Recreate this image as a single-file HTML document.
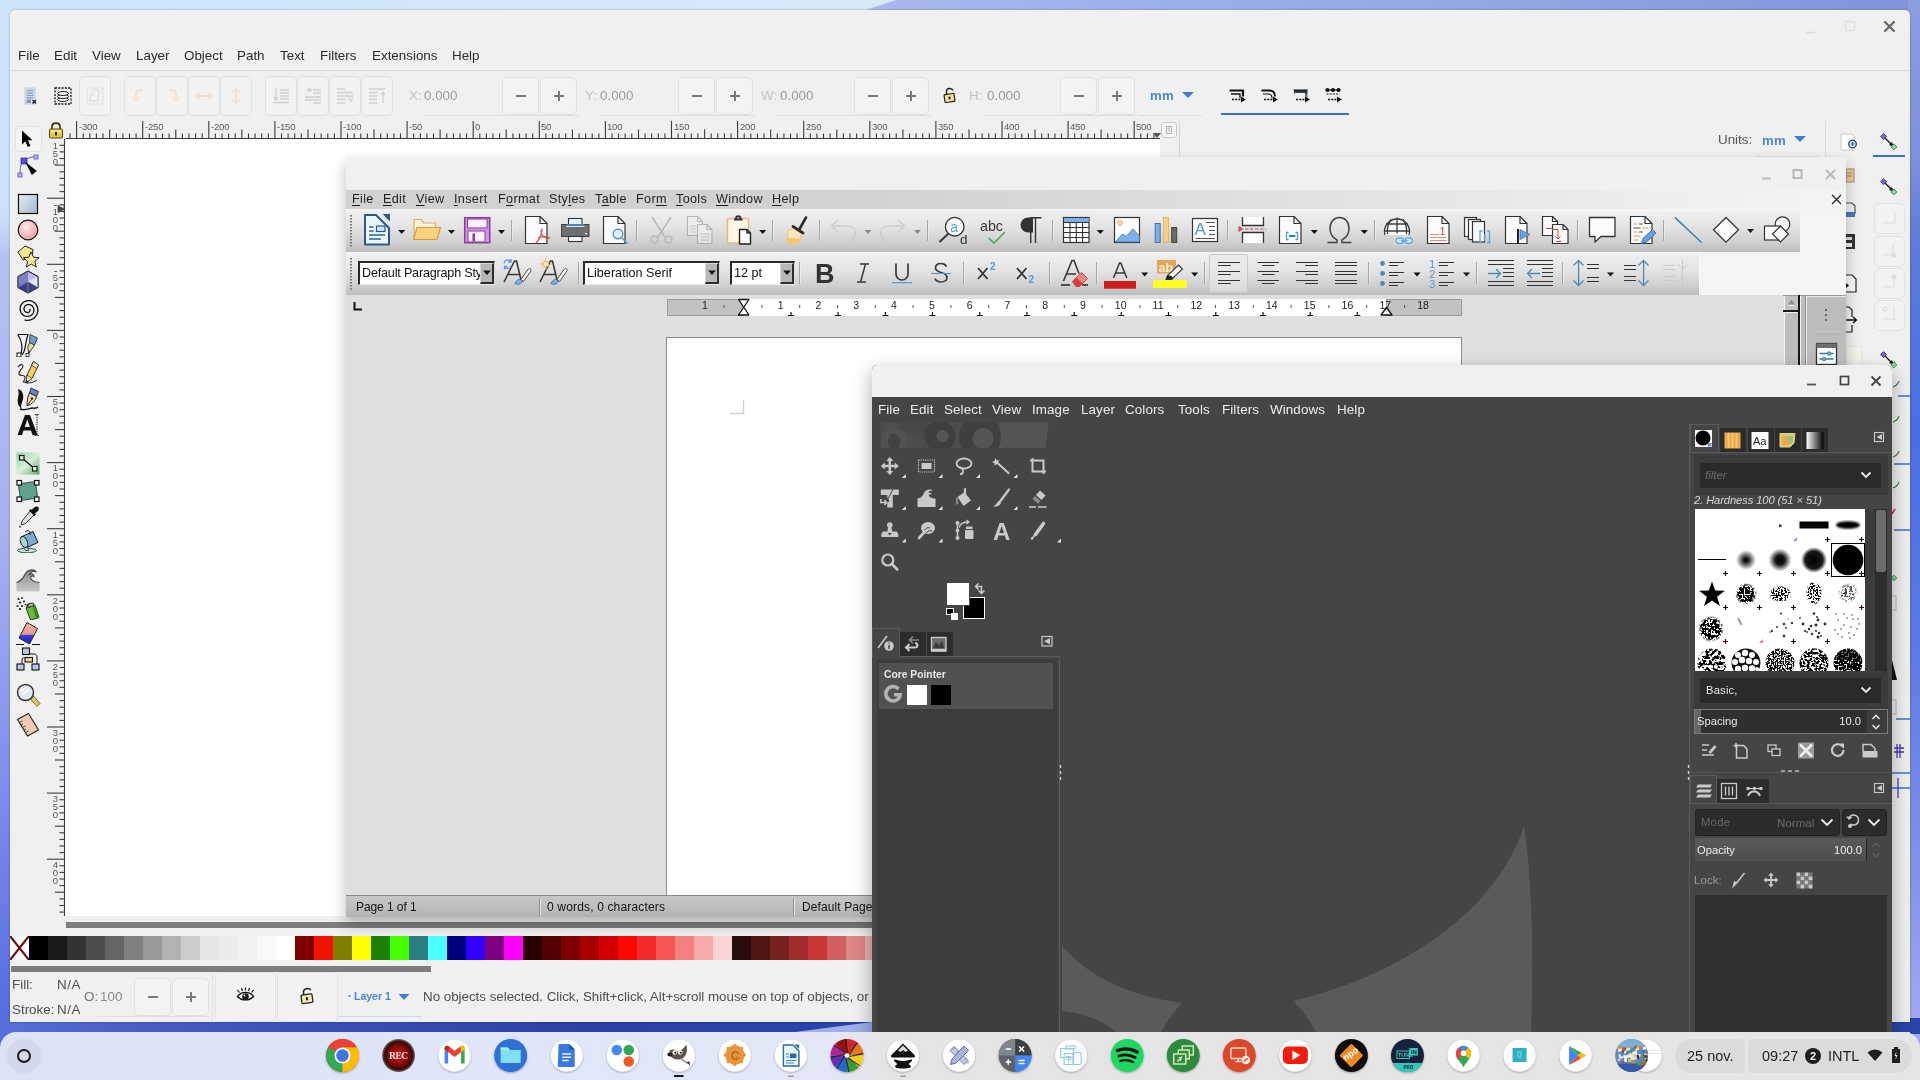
<!DOCTYPE html>
<html><head><meta charset="utf-8"><title>desktop</title><style>
html,body{margin:0;padding:0}
body{width:1920px;height:1080px;position:relative;overflow:hidden;background:#8c9be6;font-family:"Liberation Sans",sans-serif;}
div,svg{position:absolute;}
.t{white-space:nowrap;will-change:transform;}
svg{will-change:transform;}
u{text-decoration:underline;text-underline-offset:1.5px;text-decoration-thickness:1px}
</style></head><body>
<div style="left:0px;top:0px;width:1920px;height:12px;background:linear-gradient(90deg,#cfe4fb 0%,#d8eafa 45%,#d9e9f9 46%);"></div><svg style="left:0px;top:0px;" width="1920" height="12" viewBox="0 0 1920 12"><defs><linearGradient id="wpt" x1="0" x2="1"><stop offset="0" stop-color="#aab8ec"/><stop offset=".25" stop-color="#9fb0f0"/><stop offset=".6" stop-color="#93a6e4"/><stop offset="1" stop-color="#8094dc"/></linearGradient></defs><path d="M866 10 L896 0 L1920 0 L1920 12 L866 12Z" fill="url(#wpt)"/></svg><div style="left:0px;top:0px;width:12px;height:1080px;background:linear-gradient(180deg,#cfe4fb 0%,#cbe0fa 20%,#b4c0f4 24%,#a8b0f0 50%,#7f8fee 72%,#5a70e0 92%,#4f6ae0 100%);"></div><div style="left:1908px;top:0px;width:12px;height:1080px;background:linear-gradient(180deg,#8c9fe0 0%,#7c90dc 15%,#5f7cd8 22%,#4a6ee0 40%,#5d7ae4 60%,#7d8fe8 78%,#a0a8f0 94%);"></div><div style="left:0px;top:1018px;width:1920px;height:16px;background:linear-gradient(90deg,#5670dc 0%,#4a60c8 6%,#3a50b8 16%,#2b42a8 30%,#2b44ac 42%);"></div><svg style="left:780px;top:1018px;" width="140" height="16" viewBox="0 0 140 16"><path d="M0 16 L92 4 L140 4 L140 16Z" fill="#9fb0ea"/></svg>
<div style="left:10px;top:10px;width:1900px;height:1012px;background:#f0f0f0;border-radius:5px 5px 0 0;box-shadow:0 0 3px rgba(0,0,0,.25);"></div><svg style="left:1800px;top:14px;" width="100" height="26" viewBox="0 0 100 26"><path d="M6 18.5h9" stroke="#dcdcdc" stroke-width="1.6"/><rect x="45.5" y="7.5" width="9" height="9" fill="none" stroke="#e0e0e0" stroke-width="1.4"/><path d="M85 8l9 9M94 8l-9 9" stroke="#666" stroke-width="2.2" stroke-linecap="round"/></svg><div class="t" style="left:18px;top:47px;font-size:13.4px;color:#2a2a2a;line-height:17px;">File</div><div class="t" style="left:54px;top:47px;font-size:13.4px;color:#2a2a2a;line-height:17px;">Edit</div><div class="t" style="left:92px;top:47px;font-size:13.4px;color:#2a2a2a;line-height:17px;">View</div><div class="t" style="left:136px;top:47px;font-size:13.4px;color:#2a2a2a;line-height:17px;">Layer</div><div class="t" style="left:184px;top:47px;font-size:13.4px;color:#2a2a2a;line-height:17px;">Object</div><div class="t" style="left:237px;top:47px;font-size:13.4px;color:#2a2a2a;line-height:17px;">Path</div><div class="t" style="left:280px;top:47px;font-size:13.4px;color:#2a2a2a;line-height:17px;">Text</div><div class="t" style="left:320px;top:47px;font-size:13.4px;color:#2a2a2a;line-height:17px;">Filters</div><div class="t" style="left:372px;top:47px;font-size:13.4px;color:#2a2a2a;line-height:17px;">Extensions</div><div class="t" style="left:452px;top:47px;font-size:13.4px;color:#2a2a2a;line-height:17px;">Help</div><div style="left:10px;top:70px;width:1900px;height:1px;background:#dadada;"></div><div style="left:79px;top:76px;width:32px;height:40px;border:1px solid #e1e1e1;border-radius:5px;box-sizing:border-box;background:#f2f2f2;"></div><div style="left:124px;top:76px;width:32px;height:40px;border:1px solid #e1e1e1;border-radius:5px;box-sizing:border-box;background:#f2f2f2;"></div><div style="left:156px;top:76px;width:32px;height:40px;border:1px solid #e1e1e1;border-radius:5px;box-sizing:border-box;background:#f2f2f2;"></div><div style="left:188px;top:76px;width:32px;height:40px;border:1px solid #e1e1e1;border-radius:5px;box-sizing:border-box;background:#f2f2f2;"></div><div style="left:220px;top:76px;width:32px;height:40px;border:1px solid #e1e1e1;border-radius:5px;box-sizing:border-box;background:#f2f2f2;"></div><div style="left:265px;top:76px;width:32px;height:40px;border:1px solid #e1e1e1;border-radius:5px;box-sizing:border-box;background:#f2f2f2;"></div><div style="left:297px;top:76px;width:32px;height:40px;border:1px solid #e1e1e1;border-radius:5px;box-sizing:border-box;background:#f2f2f2;"></div><div style="left:329px;top:76px;width:32px;height:40px;border:1px solid #e1e1e1;border-radius:5px;box-sizing:border-box;background:#f2f2f2;"></div><div style="left:361px;top:76px;width:32px;height:40px;border:1px solid #e1e1e1;border-radius:5px;box-sizing:border-box;background:#f2f2f2;"></div><div class="t" style="left:409px;top:87px;font-size:13.4px;color:#c4c4c4;line-height:17px;">X:</div><div class="t" style="left:424px;top:87px;font-size:13.4px;color:#9a9a9a;line-height:17px;">0.000</div><div style="left:424px;top:115px;width:155px;height:1px;background:#e0e0e0;"></div><div style="left:502px;top:77px;width:37px;height:38px;border:1px solid #e1e1e1;border-radius:5px;box-sizing:border-box;background:#f3f3f3;"></div><div style="left:515.5px;top:95px;width:10px;height:2px;background:#7a7a7a;"></div><div style="left:540px;top:77px;width:37px;height:38px;border:1px solid #e1e1e1;border-radius:5px;box-sizing:border-box;background:#f3f3f3;"></div><div style="left:553.5px;top:95px;width:10px;height:2px;background:#7a7a7a;"></div><div style="left:557.5px;top:91px;width:2px;height:10px;background:#7a7a7a;"></div><div class="t" style="left:585px;top:87px;font-size:13.4px;color:#c4c4c4;line-height:17px;">Y:</div><div class="t" style="left:600px;top:87px;font-size:13.4px;color:#9a9a9a;line-height:17px;">0.000</div><div style="left:600px;top:115px;width:155px;height:1px;background:#e0e0e0;"></div><div style="left:678px;top:77px;width:37px;height:38px;border:1px solid #e1e1e1;border-radius:5px;box-sizing:border-box;background:#f3f3f3;"></div><div style="left:691.5px;top:95px;width:10px;height:2px;background:#7a7a7a;"></div><div style="left:716px;top:77px;width:37px;height:38px;border:1px solid #e1e1e1;border-radius:5px;box-sizing:border-box;background:#f3f3f3;"></div><div style="left:729.5px;top:95px;width:10px;height:2px;background:#7a7a7a;"></div><div style="left:733.5px;top:91px;width:2px;height:10px;background:#7a7a7a;"></div><div class="t" style="left:761px;top:87px;font-size:13.4px;color:#c4c4c4;line-height:17px;">W:</div><div class="t" style="left:780px;top:87px;font-size:13.4px;color:#9a9a9a;line-height:17px;">0.000</div><div style="left:776px;top:115px;width:155px;height:1px;background:#e0e0e0;"></div><div style="left:854px;top:77px;width:37px;height:38px;border:1px solid #e1e1e1;border-radius:5px;box-sizing:border-box;background:#f3f3f3;"></div><div style="left:867.5px;top:95px;width:10px;height:2px;background:#7a7a7a;"></div><div style="left:892px;top:77px;width:37px;height:38px;border:1px solid #e1e1e1;border-radius:5px;box-sizing:border-box;background:#f3f3f3;"></div><div style="left:905.5px;top:95px;width:10px;height:2px;background:#7a7a7a;"></div><div style="left:909.5px;top:91px;width:2px;height:10px;background:#7a7a7a;"></div><div class="t" style="left:969px;top:87px;font-size:13.4px;color:#c4c4c4;line-height:17px;">H:</div><div class="t" style="left:987px;top:87px;font-size:13.4px;color:#9a9a9a;line-height:17px;">0.000</div><div style="left:984px;top:115px;width:152px;height:1px;background:#e0e0e0;"></div><div style="left:1060px;top:77px;width:37px;height:38px;border:1px solid #e1e1e1;border-radius:5px;box-sizing:border-box;background:#f3f3f3;"></div><div style="left:1073.5px;top:95px;width:10px;height:2px;background:#7a7a7a;"></div><div style="left:1098px;top:77px;width:37px;height:38px;border:1px solid #e1e1e1;border-radius:5px;box-sizing:border-box;background:#f3f3f3;"></div><div style="left:1111.5px;top:95px;width:10px;height:2px;background:#7a7a7a;"></div><div style="left:1115.5px;top:91px;width:2px;height:10px;background:#7a7a7a;"></div><div class="t" style="left:1150px;top:87px;font-size:13.2px;font-weight:bold;color:#4a88d0;line-height:17px;letter-spacing:.35px;">mm</div><svg style="left:1181px;top:91px;" width="14" height="8" viewBox="0 0 14 8"><path d="M1 1h12l-6 6z" fill="#3f7fd6"/></svg><div style="left:1138px;top:115px;width:64px;height:1px;background:#e0e0e0;"></div><div style="left:1221px;top:113px;width:128px;height:2px;background:#3d6fd0;"></div><div class="t" style="left:1718px;top:131px;font-size:13.4px;color:#555;line-height:17px;">Units:</div><div class="t" style="left:1762px;top:132px;font-size:13.2px;font-weight:bold;color:#4a88d0;line-height:17px;letter-spacing:.35px;">mm</div><svg style="left:1793px;top:135px;" width="14" height="8" viewBox="0 0 14 8"><path d="M1 1h12l-6 6z" fill="#3f7fd6"/></svg><div style="left:1755px;top:156px;width:64px;height:1px;background:#e0e0e0;"></div><div style="left:1825px;top:121px;width:1px;height:40px;background:#dcdcdc;"></div><div style="left:1873px;top:155px;width:32px;height:2px;background:#3d6fd0;"></div><div style="left:65px;top:139px;width:1095px;height:777px;background:#fff;"></div><div style="left:1179px;top:121px;width:1px;height:40px;background:#d4d4d4;"></div><div style="left:1161px;top:122px;width:16px;height:16px;border:1px solid #c8c8c8;border-radius:3px;box-sizing:border-box;background:#f6f6f6;"></div><svg style="left:0px;top:0px;" width="1200" height="140" viewBox="0 0 1200 140"><g stroke="#3a3a3a" stroke-width="1.1" fill="none"><path d="M70.0 133.5V138"/><path d="M76.6 121V138"/><path d="M83.2 133.5V138"/><path d="M89.8 133.5V138"/><path d="M96.4 133.5V138"/><path d="M103.0 133.5V138"/><path d="M109.7 129.5V138"/><path d="M116.3 133.5V138"/><path d="M122.9 133.5V138"/><path d="M129.5 133.5V138"/><path d="M136.1 133.5V138"/><path d="M142.7 121V138"/><path d="M149.3 133.5V138"/><path d="M155.9 133.5V138"/><path d="M162.5 133.5V138"/><path d="M169.1 133.5V138"/><path d="M175.8 129.5V138"/><path d="M182.4 133.5V138"/><path d="M189.0 133.5V138"/><path d="M195.6 133.5V138"/><path d="M202.2 133.5V138"/><path d="M208.8 121V138"/><path d="M215.4 133.5V138"/><path d="M222.0 133.5V138"/><path d="M228.6 133.5V138"/><path d="M235.2 133.5V138"/><path d="M241.8 129.5V138"/><path d="M248.5 133.5V138"/><path d="M255.1 133.5V138"/><path d="M261.7 133.5V138"/><path d="M268.3 133.5V138"/><path d="M274.9 121V138"/><path d="M281.5 133.5V138"/><path d="M288.1 133.5V138"/><path d="M294.7 133.5V138"/><path d="M301.3 133.5V138"/><path d="M308.0 129.5V138"/><path d="M314.6 133.5V138"/><path d="M321.2 133.5V138"/><path d="M327.8 133.5V138"/><path d="M334.4 133.5V138"/><path d="M341.0 121V138"/><path d="M347.6 133.5V138"/><path d="M354.2 133.5V138"/><path d="M360.8 133.5V138"/><path d="M367.4 133.5V138"/><path d="M374.0 129.5V138"/><path d="M380.7 133.5V138"/><path d="M387.3 133.5V138"/><path d="M393.9 133.5V138"/><path d="M400.5 133.5V138"/><path d="M407.1 121V138"/><path d="M413.7 133.5V138"/><path d="M420.3 133.5V138"/><path d="M426.9 133.5V138"/><path d="M433.5 133.5V138"/><path d="M440.1 129.5V138"/><path d="M446.8 133.5V138"/><path d="M453.4 133.5V138"/><path d="M460.0 133.5V138"/><path d="M466.6 133.5V138"/><path d="M473.2 121V138"/><path d="M479.8 133.5V138"/><path d="M486.4 133.5V138"/><path d="M493.0 133.5V138"/><path d="M499.6 133.5V138"/><path d="M506.2 129.5V138"/><path d="M512.9 133.5V138"/><path d="M519.5 133.5V138"/><path d="M526.1 133.5V138"/><path d="M532.7 133.5V138"/><path d="M539.3 121V138"/><path d="M545.9 133.5V138"/><path d="M552.5 133.5V138"/><path d="M559.1 133.5V138"/><path d="M565.7 133.5V138"/><path d="M572.4 129.5V138"/><path d="M579.0 133.5V138"/><path d="M585.6 133.5V138"/><path d="M592.2 133.5V138"/><path d="M598.8 133.5V138"/><path d="M605.4 121V138"/><path d="M612.0 133.5V138"/><path d="M618.6 133.5V138"/><path d="M625.2 133.5V138"/><path d="M631.8 133.5V138"/><path d="M638.5 129.5V138"/><path d="M645.1 133.5V138"/><path d="M651.7 133.5V138"/><path d="M658.3 133.5V138"/><path d="M664.9 133.5V138"/><path d="M671.5 121V138"/><path d="M678.1 133.5V138"/><path d="M684.7 133.5V138"/><path d="M691.3 133.5V138"/><path d="M697.9 133.5V138"/><path d="M704.6 129.5V138"/><path d="M711.2 133.5V138"/><path d="M717.8 133.5V138"/><path d="M724.4 133.5V138"/><path d="M731.0 133.5V138"/><path d="M737.6 121V138"/><path d="M744.2 133.5V138"/><path d="M750.8 133.5V138"/><path d="M757.4 133.5V138"/><path d="M764.0 133.5V138"/><path d="M770.7 129.5V138"/><path d="M777.3 133.5V138"/><path d="M783.9 133.5V138"/><path d="M790.5 133.5V138"/><path d="M797.1 133.5V138"/><path d="M803.7 121V138"/><path d="M810.3 133.5V138"/><path d="M816.9 133.5V138"/><path d="M823.5 133.5V138"/><path d="M830.1 133.5V138"/><path d="M836.8 129.5V138"/><path d="M843.4 133.5V138"/><path d="M850.0 133.5V138"/><path d="M856.6 133.5V138"/><path d="M863.2 133.5V138"/><path d="M869.8 121V138"/><path d="M876.4 133.5V138"/><path d="M883.0 133.5V138"/><path d="M889.6 133.5V138"/><path d="M896.2 133.5V138"/><path d="M902.9 129.5V138"/><path d="M909.5 133.5V138"/><path d="M916.1 133.5V138"/><path d="M922.7 133.5V138"/><path d="M929.3 133.5V138"/><path d="M935.9 121V138"/><path d="M942.5 133.5V138"/><path d="M949.1 133.5V138"/><path d="M955.7 133.5V138"/><path d="M962.3 133.5V138"/><path d="M969.0 129.5V138"/><path d="M975.6 133.5V138"/><path d="M982.2 133.5V138"/><path d="M988.8 133.5V138"/><path d="M995.4 133.5V138"/><path d="M1002.0 121V138"/><path d="M1008.6 133.5V138"/><path d="M1015.2 133.5V138"/><path d="M1021.8 133.5V138"/><path d="M1028.4 133.5V138"/><path d="M1035.0 129.5V138"/><path d="M1041.7 133.5V138"/><path d="M1048.3 133.5V138"/><path d="M1054.9 133.5V138"/><path d="M1061.5 133.5V138"/><path d="M1068.1 121V138"/><path d="M1074.7 133.5V138"/><path d="M1081.3 133.5V138"/><path d="M1087.9 133.5V138"/><path d="M1094.5 133.5V138"/><path d="M1101.1 129.5V138"/><path d="M1107.8 133.5V138"/><path d="M1114.4 133.5V138"/><path d="M1121.0 133.5V138"/><path d="M1127.6 133.5V138"/><path d="M1134.2 121V138"/><path d="M1140.8 133.5V138"/><path d="M1147.4 133.5V138"/><path d="M1154.0 133.5V138"/><path d="M66 138.5H1160" /></g></svg><div class="t" style="left:78.6px;top:121px;font-size:9.5px;color:#5a5a5a;line-height:11px;letter-spacing:-.2px;">-300</div><div class="t" style="left:144.7px;top:121px;font-size:9.5px;color:#5a5a5a;line-height:11px;letter-spacing:-.2px;">-250</div><div class="t" style="left:210.79999999999998px;top:121px;font-size:9.5px;color:#5a5a5a;line-height:11px;letter-spacing:-.2px;">-200</div><div class="t" style="left:276.9px;top:121px;font-size:9.5px;color:#5a5a5a;line-height:11px;letter-spacing:-.2px;">-150</div><div class="t" style="left:343.0px;top:121px;font-size:9.5px;color:#5a5a5a;line-height:11px;letter-spacing:-.2px;">-100</div><div class="t" style="left:409.1px;top:121px;font-size:9.5px;color:#5a5a5a;line-height:11px;letter-spacing:-.2px;">-50</div><div class="t" style="left:475.19999999999993px;top:121px;font-size:9.5px;color:#5a5a5a;line-height:11px;letter-spacing:-.2px;">0</div><div class="t" style="left:541.3px;top:121px;font-size:9.5px;color:#5a5a5a;line-height:11px;letter-spacing:-.2px;">50</div><div class="t" style="left:607.4px;top:121px;font-size:9.5px;color:#5a5a5a;line-height:11px;letter-spacing:-.2px;">100</div><div class="t" style="left:673.5px;top:121px;font-size:9.5px;color:#5a5a5a;line-height:11px;letter-spacing:-.2px;">150</div><div class="t" style="left:739.6px;top:121px;font-size:9.5px;color:#5a5a5a;line-height:11px;letter-spacing:-.2px;">200</div><div class="t" style="left:805.6999999999999px;top:121px;font-size:9.5px;color:#5a5a5a;line-height:11px;letter-spacing:-.2px;">250</div><div class="t" style="left:871.8px;top:121px;font-size:9.5px;color:#5a5a5a;line-height:11px;letter-spacing:-.2px;">300</div><div class="t" style="left:937.9px;top:121px;font-size:9.5px;color:#5a5a5a;line-height:11px;letter-spacing:-.2px;">350</div><div class="t" style="left:1003.9999999999999px;top:121px;font-size:9.5px;color:#5a5a5a;line-height:11px;letter-spacing:-.2px;">400</div><div class="t" style="left:1070.1px;top:121px;font-size:9.5px;color:#5a5a5a;line-height:11px;letter-spacing:-.2px;">450</div><div class="t" style="left:1136.1999999999998px;top:121px;font-size:9.5px;color:#5a5a5a;line-height:11px;letter-spacing:-.2px;">500</div><svg style="left:0px;top:0px;" width="70" height="920" viewBox="0 0 70 920"><g stroke="#3a3a3a" stroke-width="1.1" fill="none"><path d="M59.5 145.3H64"/><path d="M59.5 151.9H64"/><path d="M59.5 158.5H64"/><path d="M55 165.1H64"/><path d="M59.5 171.8H64"/><path d="M59.5 178.4H64"/><path d="M59.5 185.0H64"/><path d="M59.5 191.6H64"/><path d="M47 198.2H64"/><path d="M59.5 204.8H64"/><path d="M59.5 211.4H64"/><path d="M59.5 218.0H64"/><path d="M59.5 224.6H64"/><path d="M55 231.2H64"/><path d="M59.5 237.9H64"/><path d="M59.5 244.5H64"/><path d="M59.5 251.1H64"/><path d="M59.5 257.7H64"/><path d="M47 264.3H64"/><path d="M59.5 270.9H64"/><path d="M59.5 277.5H64"/><path d="M59.5 284.1H64"/><path d="M59.5 290.7H64"/><path d="M55 297.4H64"/><path d="M59.5 304.0H64"/><path d="M59.5 310.6H64"/><path d="M59.5 317.2H64"/><path d="M59.5 323.8H64"/><path d="M47 330.4H64"/><path d="M59.5 337.0H64"/><path d="M59.5 343.6H64"/><path d="M59.5 350.2H64"/><path d="M59.5 356.8H64"/><path d="M55 363.4H64"/><path d="M59.5 370.1H64"/><path d="M59.5 376.7H64"/><path d="M59.5 383.3H64"/><path d="M59.5 389.9H64"/><path d="M47 396.5H64"/><path d="M59.5 403.1H64"/><path d="M59.5 409.7H64"/><path d="M59.5 416.3H64"/><path d="M59.5 422.9H64"/><path d="M55 429.6H64"/><path d="M59.5 436.2H64"/><path d="M59.5 442.8H64"/><path d="M59.5 449.4H64"/><path d="M59.5 456.0H64"/><path d="M47 462.6H64"/><path d="M59.5 469.2H64"/><path d="M59.5 475.8H64"/><path d="M59.5 482.4H64"/><path d="M59.5 489.0H64"/><path d="M55 495.6H64"/><path d="M59.5 502.3H64"/><path d="M59.5 508.9H64"/><path d="M59.5 515.5H64"/><path d="M59.5 522.1H64"/><path d="M47 528.7H64"/><path d="M59.5 535.3H64"/><path d="M59.5 541.9H64"/><path d="M59.5 548.5H64"/><path d="M59.5 555.1H64"/><path d="M55 561.8H64"/><path d="M59.5 568.4H64"/><path d="M59.5 575.0H64"/><path d="M59.5 581.6H64"/><path d="M59.5 588.2H64"/><path d="M47 594.8H64"/><path d="M59.5 601.4H64"/><path d="M59.5 608.0H64"/><path d="M59.5 614.6H64"/><path d="M59.5 621.2H64"/><path d="M55 627.9H64"/><path d="M59.5 634.5H64"/><path d="M59.5 641.1H64"/><path d="M59.5 647.7H64"/><path d="M59.5 654.3H64"/><path d="M47 660.9H64"/><path d="M59.5 667.5H64"/><path d="M59.5 674.1H64"/><path d="M59.5 680.7H64"/><path d="M59.5 687.3H64"/><path d="M55 694.0H64"/><path d="M59.5 700.6H64"/><path d="M59.5 707.2H64"/><path d="M59.5 713.8H64"/><path d="M59.5 720.4H64"/><path d="M47 727.0H64"/><path d="M59.5 733.6H64"/><path d="M59.5 740.2H64"/><path d="M59.5 746.8H64"/><path d="M59.5 753.4H64"/><path d="M55 760.0H64"/><path d="M59.5 766.7H64"/><path d="M59.5 773.3H64"/><path d="M59.5 779.9H64"/><path d="M59.5 786.5H64"/><path d="M47 793.1H64"/><path d="M59.5 799.7H64"/><path d="M59.5 806.3H64"/><path d="M59.5 812.9H64"/><path d="M59.5 819.5H64"/><path d="M55 826.2H64"/><path d="M59.5 832.8H64"/><path d="M59.5 839.4H64"/><path d="M59.5 846.0H64"/><path d="M59.5 852.6H64"/><path d="M47 859.2H64"/><path d="M59.5 865.8H64"/><path d="M59.5 872.4H64"/><path d="M59.5 879.0H64"/><path d="M59.5 885.6H64"/><path d="M55 892.2H64"/><path d="M59.5 898.9H64"/><path d="M59.5 905.5H64"/><path d="M59.5 912.1H64"/><path d="M64.5 139V916"/></g></svg><div class="t" style="left:52px;top:140.52999999999997px;font-size:9.5px;color:#5a5a5a;line-height:10px;width:7px;text-align:center;">1</div><div class="t" style="left:52px;top:148.52999999999997px;font-size:9.5px;color:#5a5a5a;line-height:10px;width:7px;text-align:center;">5</div><div class="t" style="left:52px;top:156.52999999999997px;font-size:9.5px;color:#5a5a5a;line-height:10px;width:7px;text-align:center;">0</div><div style="left:54px;top:204.7px;width:3px;height:1px;background:#6a6a6a;"></div><div class="t" style="left:52px;top:206.7px;font-size:9.5px;color:#5a5a5a;line-height:10px;width:7px;text-align:center;">1</div><div class="t" style="left:52px;top:214.7px;font-size:9.5px;color:#5a5a5a;line-height:10px;width:7px;text-align:center;">0</div><div class="t" style="left:52px;top:222.7px;font-size:9.5px;color:#5a5a5a;line-height:10px;width:7px;text-align:center;">0</div><div style="left:54px;top:270.87px;width:3px;height:1px;background:#6a6a6a;"></div><div class="t" style="left:52px;top:272.87px;font-size:9.5px;color:#5a5a5a;line-height:10px;width:7px;text-align:center;">5</div><div class="t" style="left:52px;top:280.87px;font-size:9.5px;color:#5a5a5a;line-height:10px;width:7px;text-align:center;">0</div><div class="t" style="left:52px;top:331.03999999999996px;font-size:9.5px;color:#5a5a5a;line-height:10px;width:7px;text-align:center;">0</div><div class="t" style="left:52px;top:397.21px;font-size:9.5px;color:#5a5a5a;line-height:10px;width:7px;text-align:center;">5</div><div class="t" style="left:52px;top:405.21px;font-size:9.5px;color:#5a5a5a;line-height:10px;width:7px;text-align:center;">0</div><div class="t" style="left:52px;top:463.38px;font-size:9.5px;color:#5a5a5a;line-height:10px;width:7px;text-align:center;">1</div><div class="t" style="left:52px;top:471.38px;font-size:9.5px;color:#5a5a5a;line-height:10px;width:7px;text-align:center;">0</div><div class="t" style="left:52px;top:479.38px;font-size:9.5px;color:#5a5a5a;line-height:10px;width:7px;text-align:center;">0</div><div class="t" style="left:52px;top:529.55px;font-size:9.5px;color:#5a5a5a;line-height:10px;width:7px;text-align:center;">1</div><div class="t" style="left:52px;top:537.55px;font-size:9.5px;color:#5a5a5a;line-height:10px;width:7px;text-align:center;">5</div><div class="t" style="left:52px;top:545.55px;font-size:9.5px;color:#5a5a5a;line-height:10px;width:7px;text-align:center;">0</div><div class="t" style="left:52px;top:595.72px;font-size:9.5px;color:#5a5a5a;line-height:10px;width:7px;text-align:center;">2</div><div class="t" style="left:52px;top:603.72px;font-size:9.5px;color:#5a5a5a;line-height:10px;width:7px;text-align:center;">0</div><div class="t" style="left:52px;top:611.72px;font-size:9.5px;color:#5a5a5a;line-height:10px;width:7px;text-align:center;">0</div><div class="t" style="left:52px;top:661.89px;font-size:9.5px;color:#5a5a5a;line-height:10px;width:7px;text-align:center;">2</div><div class="t" style="left:52px;top:669.89px;font-size:9.5px;color:#5a5a5a;line-height:10px;width:7px;text-align:center;">5</div><div class="t" style="left:52px;top:677.89px;font-size:9.5px;color:#5a5a5a;line-height:10px;width:7px;text-align:center;">0</div><div class="t" style="left:52px;top:728.06px;font-size:9.5px;color:#5a5a5a;line-height:10px;width:7px;text-align:center;">3</div><div class="t" style="left:52px;top:736.06px;font-size:9.5px;color:#5a5a5a;line-height:10px;width:7px;text-align:center;">0</div><div class="t" style="left:52px;top:744.06px;font-size:9.5px;color:#5a5a5a;line-height:10px;width:7px;text-align:center;">0</div><div class="t" style="left:52px;top:794.23px;font-size:9.5px;color:#5a5a5a;line-height:10px;width:7px;text-align:center;">3</div><div class="t" style="left:52px;top:802.23px;font-size:9.5px;color:#5a5a5a;line-height:10px;width:7px;text-align:center;">5</div><div class="t" style="left:52px;top:810.23px;font-size:9.5px;color:#5a5a5a;line-height:10px;width:7px;text-align:center;">0</div><div class="t" style="left:52px;top:860.4000000000001px;font-size:9.5px;color:#5a5a5a;line-height:10px;width:7px;text-align:center;">4</div><div class="t" style="left:52px;top:868.4000000000001px;font-size:9.5px;color:#5a5a5a;line-height:10px;width:7px;text-align:center;">0</div><div class="t" style="left:52px;top:876.4000000000001px;font-size:9.5px;color:#5a5a5a;line-height:10px;width:7px;text-align:center;">0</div><div style="left:66px;top:922px;width:1100px;height:6px;background:#7d7d7d;"></div><div style="left:10px;top:936px;width:19px;height:24px;background:#fff;"></div><svg style="left:10px;top:936px;" width="19" height="24" viewBox="0 0 19 24"><path d="M0 0L19 24M19 0L0 24" stroke="#6b1010" stroke-width="2.2"/></svg><div style="left:29px;top:936px;width:19px;height:24px;background:#000000;"></div><div style="left:48px;top:936px;width:19px;height:24px;background:#1a1a1a;"></div><div style="left:67px;top:936px;width:19px;height:24px;background:#333333;"></div><div style="left:86px;top:936px;width:19px;height:24px;background:#4d4d4d;"></div><div style="left:105px;top:936px;width:19px;height:24px;background:#666666;"></div><div style="left:124px;top:936px;width:19px;height:24px;background:#808080;"></div><div style="left:143px;top:936px;width:19px;height:24px;background:#999999;"></div><div style="left:162px;top:936px;width:19px;height:24px;background:#b3b3b3;"></div><div style="left:181px;top:936px;width:19px;height:24px;background:#cccccc;"></div><div style="left:200px;top:936px;width:19px;height:24px;background:#e6e6e6;"></div><div style="left:219px;top:936px;width:19px;height:24px;background:#ececec;"></div><div style="left:238px;top:936px;width:19px;height:24px;background:#f2f2f2;"></div><div style="left:257px;top:936px;width:19px;height:24px;background:#f9f9f9;"></div><div style="left:276px;top:936px;width:19px;height:24px;background:#ffffff;"></div><div style="left:295px;top:936px;width:19px;height:24px;background:#800000;"></div><div style="left:314px;top:936px;width:19px;height:24px;background:#f31200;"></div><div style="left:333px;top:936px;width:19px;height:24px;background:#808000;"></div><div style="left:352px;top:936px;width:19px;height:24px;background:#ffff00;"></div><div style="left:371px;top:936px;width:19px;height:24px;background:#1c8000;"></div><div style="left:390px;top:936px;width:19px;height:24px;background:#45ff00;"></div><div style="left:409px;top:936px;width:19px;height:24px;background:#2a8080;"></div><div style="left:428px;top:936px;width:19px;height:24px;background:#4affff;"></div><div style="left:447px;top:936px;width:19px;height:24px;background:#000080;"></div><div style="left:466px;top:936px;width:19px;height:24px;background:#3300ff;"></div><div style="left:485px;top:936px;width:19px;height:24px;background:#800080;"></div><div style="left:504px;top:936px;width:19px;height:24px;background:#ff00ff;"></div><div style="left:523px;top:936px;width:19px;height:24px;background:#2b0000;"></div><div style="left:542px;top:936px;width:19px;height:24px;background:#550000;"></div><div style="left:561px;top:936px;width:19px;height:24px;background:#800000;"></div><div style="left:580px;top:936px;width:19px;height:24px;background:#aa0000;"></div><div style="left:599px;top:936px;width:19px;height:24px;background:#d40000;"></div><div style="left:618px;top:936px;width:19px;height:24px;background:#f80a00;"></div><div style="left:637px;top:936px;width:19px;height:24px;background:#f62a2a;"></div><div style="left:656px;top:936px;width:19px;height:24px;background:#f55555;"></div><div style="left:675px;top:936px;width:19px;height:24px;background:#f58080;"></div><div style="left:694px;top:936px;width:19px;height:24px;background:#f8aaaa;"></div><div style="left:713px;top:936px;width:19px;height:24px;background:#fbd5d5;"></div><div style="left:732px;top:936px;width:19px;height:24px;background:#280b0b;"></div><div style="left:751px;top:936px;width:19px;height:24px;background:#501616;"></div><div style="left:770px;top:936px;width:19px;height:24px;background:#782121;"></div><div style="left:789px;top:936px;width:19px;height:24px;background:#a02c2c;"></div><div style="left:808px;top:936px;width:19px;height:24px;background:#c83737;"></div><div style="left:827px;top:936px;width:19px;height:24px;background:#d35f5f;"></div><div style="left:846px;top:936px;width:19px;height:24px;background:#de8787;"></div><div style="left:865px;top:936px;width:19px;height:24px;background:#e9afaf;"></div><div style="left:884px;top:936px;width:19px;height:24px;background:#f4d7d7;"></div><div style="left:11px;top:966px;width:420px;height:6px;background:#7d7d7d;"></div><div class="t" style="left:12px;top:976px;font-size:13.4px;color:#4f4f4f;line-height:17px;">Fill:</div><div class="t" style="left:57px;top:976px;font-size:13.4px;color:#4f4f4f;line-height:17px;letter-spacing:.6px;">N/A</div><div class="t" style="left:12px;top:1001px;font-size:13.4px;color:#4f4f4f;line-height:17px;">Stroke:</div><div class="t" style="left:57px;top:1001px;font-size:13.4px;color:#4f4f4f;line-height:17px;letter-spacing:.6px;">N/A</div><div class="t" style="left:84px;top:988px;font-size:13.4px;color:#4f4f4f;line-height:17px;color:#777;">O:</div><div class="t" style="left:100px;top:988px;font-size:13.4px;color:#4f4f4f;line-height:17px;color:#8a8a8a;">100</div><div style="left:97px;top:1016px;width:113px;height:1px;background:#e0e0e0;"></div><div style="left:134px;top:978px;width:37px;height:38px;border:1px solid #e1e1e1;border-radius:5px;box-sizing:border-box;background:#f3f3f3;"></div><div style="left:147.5px;top:996px;width:10px;height:2px;background:#7a7a7a;"></div><div style="left:172px;top:978px;width:37px;height:38px;border:1px solid #e1e1e1;border-radius:5px;box-sizing:border-box;background:#f3f3f3;"></div><div style="left:185.5px;top:996px;width:10px;height:2px;background:#7a7a7a;"></div><div style="left:189.5px;top:992px;width:2px;height:10px;background:#7a7a7a;"></div><div style="left:212px;top:972px;width:1px;height:50px;background:#e2e2e2;"></div><div style="left:215px;top:972px;width:61px;height:50px;border:1px solid #e4e4e4;border-radius:5px;box-sizing:border-box;background:#f2f2f2;"></div><div style="left:277px;top:972px;width:61px;height:50px;border:1px solid #e4e4e4;border-radius:5px;box-sizing:border-box;background:#f2f2f2;"></div><svg style="left:236px;top:986px;" width="20" height="18" viewBox="0 0 20 18"><path d="M1.500 10.500c4-5.500 12-5.500 16 0-4 4.500-12 4.500-16 0z" fill="#fff" stroke="#111" stroke-width="1.400"/><circle cx="9.500" cy="10.500" r="3.300" fill="#111"/><circle cx="8.500" cy="9.500" r="1" fill="#fff"/><path d="M3.500 6.500l-2-2.500M6.500 5l-1-3M9.500 4.500v-3M12.500 5l1-3M15.500 6.500l2-2.500" stroke="#111" stroke-width="1.200"/></svg><svg style="left:299px;top:986px;" width="17" height="19" viewBox="0 0 17 19"><path d="M5 9v-3c0-4 6.500-4.500 7.500-1" fill="none" stroke="#222" stroke-width="1.500" transform="rotate(-10 8 9)"/><rect x="2.500" y="8.500" width="11" height="8.500" rx="1" fill="#f4ecac" stroke="#222" stroke-width="1.300" transform="rotate(-8 8 13)"/><rect x="7" y="11" width="2" height="3.500" fill="#222" transform="rotate(-8 8 13)"/></svg><div class="t" style="left:347.5px;top:989px;font-size:8px;color:#4a86d4;line-height:14px;">•</div><div class="t" style="left:353.5px;top:988px;font-size:10.5px;font-weight:bold;color:#4a86d4;line-height:17px;">Layer 1</div><svg style="left:398px;top:993px;" width="12" height="8" viewBox="0 0 12 8"><path d="M.5 1h11l-5.500 6z" fill="#3f7fd6"/></svg><div style="left:338px;top:1016px;width:84px;height:1px;background:#d0d8ee;"></div><div style="left:337px;top:975px;width:1px;height:42px;background:#e4e4e4;"></div><div class="t" style="left:423px;top:988px;font-size:13.4px;color:#4f4f4f;line-height:17px;letter-spacing:-.03px;">No objects selected. Click, Shift+click, Alt+scroll mouse on top of objects, or</div>
<svg width="0" height="0"><defs><linearGradient id="igr" x1="0" y1="0" x2="1" y2="1"><stop offset="0" stop-color="#e8eef4"/><stop offset="1" stop-color="#9fb6cc"/></linearGradient><radialGradient id="igc" cx=".4" cy=".35" r=".7"><stop offset="0" stop-color="#fdeaea"/><stop offset="1" stop-color="#ee9aa6"/></radialGradient><linearGradient id="igg" x1="0" y1="0" x2="1" y2="1"><stop offset="0" stop-color="#8fd39a"/><stop offset=".5" stop-color="#d9efdc"/><stop offset="1" stop-color="#5aa868"/></linearGradient><linearGradient id="ige" x1="0" y1="0" x2="0" y2="1"><stop offset="0" stop-color="#f5b9a6"/><stop offset=".55" stop-color="#e79a8e"/><stop offset=".6" stop-color="#3a3ae0"/><stop offset="1" stop-color="#2020c0"/></linearGradient><linearGradient id="igw" x1="0" y1="0" x2="0" y2="1"><stop offset="0" stop-color="#888"/><stop offset="1" stop-color="#c8c8c8"/></linearGradient></defs></svg><div style="left:15px;top:126px;width:27px;height:26px;border:1px solid #e2e2e2;border-radius:5px;box-sizing:border-box;background:#f4f4f4;"></div><svg style="left:16px;top:127px;" width="24" height="24" viewBox="0 0 24 24"><path d="M6 3.500v14l3.300-3.200 2.500 5.600 2.600-1.200-2.500-5.400h4.600z" fill="#000"/></svg><svg style="left:16px;top:154px;" width="24" height="24" viewBox="0 0 24 24"><path d="M4 20C4 10 6 4 20 2.500" fill="none" stroke="#5a55c8" stroke-width="1"/><rect x="5" y="4" width="6" height="6" fill="#5a4fd8" stroke="#3a2fb0" stroke-width=".8"/><rect x="18" y="1" width="4" height="4" fill="#b8b4f0" stroke="#5a55c8" stroke-width=".8"/><rect x="2" y="19" width="4" height="4" fill="#b8b4f0" stroke="#5a55c8" stroke-width=".8"/><path d="M9.200 7.800L20.800 17 15.800 20.900z" fill="#000"/></svg><svg style="left:16px;top:192px;" width="24" height="24" viewBox="0 0 24 24"><rect x="2.500" y="2.500" width="19" height="19" fill="url(#igr)" stroke="#111" stroke-width="1.2"/></svg><svg style="left:16px;top:218px;" width="24" height="24" viewBox="0 0 24 24"><circle cx="12" cy="12" r="9.800" fill="url(#igc)" stroke="#111" stroke-width="1.200"/></svg><svg style="left:16px;top:244px;" width="24" height="24" viewBox="0 0 24 24"><path d="M9 2l8 3.500-1 8-9 2.500-5-8z" fill="#efe88e" stroke="#222" stroke-width="1"/><path d="M15 8l2.600 5.200 5.600.5-4.400 3.700 1.500 5.600-5-3-5 3 1.300-5.500-4.200-3.800 5.400-.5z" fill="#f6ef9a" stroke="#222" stroke-width="1"/></svg><svg style="left:16px;top:270px;" width="24" height="24" viewBox="0 0 24 24"><path d="M12 1l10 5.500v11L12 23 2 17.500v-11z" fill="#b9bbe6" stroke="#333" stroke-width="1"/><path d="M12 1L2 6.500v11l10-6z" fill="#7c7fc0"/><path d="M12 11.500l10-5v11l-10 5.500z" fill="#e4e5f8"/><path d="M12 11.500L2 17.500 12 23l10-5.500z" fill="#3d3f88"/><path d="M12 1l10 5.500v11L12 23 2 17.500v-11z" fill="none" stroke="#333" stroke-width="1"/><path d="M12 11.500L12 23" stroke="#9a9cd0" stroke-width=".6"/></svg><svg style="left:16px;top:297px;" width="24" height="24" viewBox="0 0 24 24"><path d="M13.7 12.0 L13.8 12.1 L13.9 12.3 L14.0 12.5 L14.0 12.8 L14.1 13.0 L14.1 13.2 L14.0 13.5 L14.0 13.7 L13.9 13.9 L13.8 14.2 L13.6 14.4 L13.5 14.6 L13.3 14.8 L13.0 15.0 L12.8 15.2 L12.5 15.3 L12.2 15.4 L11.9 15.5 L11.6 15.5 L11.3 15.5 L10.9 15.5 L10.6 15.4 L10.3 15.3 L9.9 15.2 L9.6 15.0 L9.3 14.8 L9.0 14.5 L8.8 14.2 L8.6 13.9 L8.4 13.5 L8.2 13.2 L8.1 12.8 L8.0 12.3 L8.0 11.9 L8.0 11.5 L8.1 11.1 L8.2 10.6 L8.4 10.2 L8.6 9.8 L8.8 9.4 L9.1 9.0 L9.5 8.7 L9.9 8.4 L10.3 8.1 L10.7 7.9 L11.2 7.7 L11.7 7.6 L12.2 7.6 L12.8 7.5 L13.3 7.6 L13.8 7.7 L14.4 7.9 L14.9 8.1 L15.4 8.4 L15.8 8.7 L16.3 9.1 L16.7 9.5 L17.0 10.0 L17.3 10.5 L17.6 11.1 L17.7 11.6 L17.9 12.2 L17.9 12.9 L17.9 13.5 L17.8 14.1 L17.7 14.8 L17.5 15.4 L17.2 16.0 L16.9 16.6 L16.5 17.1 L16.0 17.6 L15.5 18.0 L14.9 18.4 L14.3 18.8 L13.6 19.0 L12.9 19.2 L12.2 19.4 L11.5 19.4 L10.8 19.4 L10.0 19.3 L9.3 19.1 L8.6 18.8 L7.9 18.5 L7.3 18.1 L6.6 17.6 L6.1 17.0 L5.6 16.4 L5.2 15.8 L4.8 15.0 L4.5 14.3 L4.3 13.5 L4.2 12.7 L4.1 11.8 L4.2 11.0 L4.3 10.2 L4.5 9.3 L4.8 8.5 L5.3 7.8 L5.7 7.0 L6.3 6.4 L6.9 5.7 L7.6 5.2 L8.4 4.7 L9.2 4.3 L10.1 4.0 L11.0 3.8 L11.9 3.7 L12.8 3.6 L13.8 3.7 L14.7 3.9 L15.6 4.2 L16.5 4.5 L17.4 5.0 L18.2 5.6 L18.9 6.2 L19.6 6.9 L20.2 7.7 L20.7 8.6 L21.1 9.5 L21.5 10.5 L21.7 11.5 L21.8 12.5 L21.8 13.5 L21.7 14.6 L21.5 15.6 L21.2 16.6 L20.8 17.6 L20.2 18.5 L19.6 19.4 L18.9 20.2 L18.1 21.0 L17.2 21.6 L16.2 22.2 L15.2 22.6 L14.1 23.0 L13.0 23.2 L11.9 23.3 L10.7 23.3 L9.6 23.2 L8.5 22.9" fill="none" stroke="#111" stroke-width="1.300"/></svg><svg style="left:16px;top:333px;" width="24" height="24" viewBox="0 0 24 24"><path d="M1.500 1.500h11M12 1.500C9 9 10 19 6 21.500" fill="none" stroke="#111" stroke-width="1.200"/><path d="M2 2c4 6 5 12 3 19" fill="none" stroke="#111" stroke-width="1.200"/><rect x="1" y="20" width="4" height="4" fill="#fff" stroke="#111"/><rect x="10" y="20.500" width="3" height="3" fill="#fff" stroke="#111" stroke-width=".8"/><path d="M14 1.500l7.500 3.500-3 7-5-2.500z" fill="#6f9fd0" stroke="#23364f" stroke-width=".9"/><path d="M13.500 9.500l5 2.500-2.500 4-3.500 4.500-.7-6.500z" fill="#e8d9a0" stroke="#333" stroke-width=".9"/><path d="M12.500 20.500l1.500-3" stroke="#111" stroke-width=".8"/></svg><svg style="left:16px;top:360px;" width="24" height="24" viewBox="0 0 24 24"><path d="M2 7c2-3 5-3 5-1 0 3-5 5-4 8 1 3 5 0 6 3 .6 2-1 4-2 5.500" fill="none" stroke="#222" stroke-width="1.100"/><path d="M17.500 1.500l5 3.500-6.500 13.500-6 4.500 1-8z" fill="#f7d352" stroke="#333" stroke-width="1"/><path d="M17.500 1.500l5 3.500-1.800 3.500-5-3.300z" fill="#fbe9a6" stroke="#333" stroke-width=".8"/><path d="M10 23l1-8 5 3.500z" fill="#f3e4c0" stroke="#333" stroke-width=".8"/><path d="M10 23l.4-3 2 1.400z" fill="#111"/><path d="M8 22c3 1.500 8 1.500 13-2" fill="none" stroke="#222" stroke-width="1"/></svg><svg style="left:16px;top:387px;" width="24" height="24" viewBox="0 0 24 24"><path d="M2 2c4 1 6 5 5 10-1 4-3 7-1 10-4-3-5-7-4-11 .7-3 1-6 0-9z" fill="#111"/><path d="M4 22c5 2 10-1 12-1s4 1 6-1" fill="none" stroke="#111" stroke-width="1.400"/><path d="M15 1l7.500 3.500-2 5-7-3.300z" fill="#5d88c4" stroke="#223" stroke-width=".9"/><path d="M13.500 6l7 3.500c-1 4-3.500 7-9.500 9.500 0-5 .5-9 2.500-13z" fill="#f0deb0" stroke="#222" stroke-width="1"/><path d="M11 19l5-7" stroke="#222" stroke-width=".9"/><circle cx="16" cy="11.500" r="1.200" fill="#222"/></svg><svg style="left:16px;top:413px;" width="24" height="24" viewBox="0 0 24 24"><path d="M9 2h5l7.500 20h-5l-1.500-4.500H7.500L6 22H1.500zM11.300 6.500L8.700 14h5.200z" fill="#111"/><path d="M19 1.500h4M21 1.500v21M19 22.500h4" stroke="#111" stroke-width=".9" stroke-dasharray="1.500 .8"/></svg><svg style="left:16px;top:452px;" width="24" height="24" viewBox="0 0 24 24"><rect x=".5" y=".5" width="23" height="22" fill="url(#igg)"/><path d="M6 6l13 11" stroke="#111" stroke-width="1.200"/><rect x="3.500" y="3.500" width="4.500" height="4.500" fill="#cfe8d2" stroke="#111" stroke-width="1.100"/><rect x="16.500" y="14.500" width="4.500" height="4.500" fill="#eef8ef" stroke="#111" stroke-width="1.100"/></svg><svg style="left:16px;top:479px;" width="24" height="24" viewBox="0 0 24 24"><path d="M3 3.500c5 2.500 11-2 18 0-2.500 5 1.500 11 0 17-6-2.500-12 2-18 0 2.500-5-1.500-11 0-17z" fill="#5fa38e" stroke="#234" stroke-width=".9"/><g fill="#fff" stroke="#111" stroke-width="1.200"><rect x="1" y="1.500" width="4.500" height="4.500"/><rect x="18.500" y="1.500" width="4.500" height="4.500"/><rect x="1" y="18" width="4.500" height="4.500"/><rect x="18.500" y="18" width="4.500" height="4.500"/></g></svg><svg style="left:16px;top:504px;" width="24" height="24" viewBox="0 0 24 24"><path d="M15 6l4 4-9.500 9.500-3.500 1.500-1-1 1.500-3.500z" fill="#d9dde2" stroke="#333" stroke-width="1"/><path d="M13 6.500l5.500 5.500 1.500-1.500-1-1.500c3-1 4.500-3.500 3.500-6-2-1.500-5 0-6.500 3l-1.500-1z" fill="#111"/><path d="M4 21.500c-.8 1-.8 2 0 2.300.800-.3.800-1.300 0-2.300z" fill="#8a9099" stroke="#333" stroke-width=".6"/></svg><svg style="left:16px;top:529px;" width="24" height="24" viewBox="0 0 24 24"><ellipse cx="11" cy="21.500" rx="9.500" ry="2.300" fill="#bfe3cc" stroke="#244" stroke-width=".9"/><path d="M8 12c-1 4-.5 7 1.500 9.500h3c-1-3-1-6 .5-9z" fill="#bfe3cc" stroke="#244" stroke-width=".8"/><path d="M5 8l12-5.500 5 11L11 18.500z" fill="#7eabd0" stroke="#123" stroke-width="1"/><ellipse cx="8" cy="13" rx="3.300" ry="5.700" transform="rotate(-24 8 13)" fill="#a9d8c0" stroke="#123" stroke-width="1"/><path d="M9 3c3-3 6-1 5 3" fill="none" stroke="#123" stroke-width="1"/></svg><svg style="left:16px;top:568px;" width="24" height="24" viewBox="0 0 24 24"><path d="M.5 23.500v-9c5-1 7-5 9-9 2-4 8-5 11-1.500-3-1.500-6-.5-7 2.500 2-1.500 4.500-.5 4.500 2-1.500-1-3-.5-3.500 1 .5 2.500 3.500 4.500 9 5v9z" fill="url(#igw)"/><path d="M.5 14.500c5-1 7-5 9-9 2-4 8-5 11-1.500-3-1.500-6-.5-7 2.500 2-1.500 4.500-.5 4.500 2-1.500-1-3-.5-3.500 1 .5 2.500 3.500 4.500 9 5" fill="none" stroke="#444" stroke-width="1.100"/></svg><svg style="left:16px;top:596px;" width="24" height="24" viewBox="0 0 24 24"><g fill="#111"><circle cx="2.500" cy="3" r="1"/><circle cx="6" cy="2" r=".9"/><circle cx="4" cy="6.500" r="1.100"/><circle cx="8" cy="5.500" r="1"/><circle cx="1.500" cy="10" r="1"/><circle cx="6" cy="10" r="1.100"/><circle cx="9.500" cy="8.500" r=".8"/><circle cx="4" cy="13" r="1.100"/></g><path d="M11 12.500c-1-5 6-7 7.500-2" fill="none" stroke="#222" stroke-width="1.400"/><path d="M10 12l9-2.500 4 12-8.500 2.500z" fill="#6dbb3c" stroke="#1f4010" stroke-width="1"/><path d="M19 9.500l4 12-3 .9-3.500-12z" fill="#3f8a1c"/><rect x="12.500" y="7.500" width="5" height="3" fill="#bbb" stroke="#333" stroke-width=".8" transform="rotate(-16 15 9)"/></svg><svg style="left:16px;top:621px;" width="24" height="24" viewBox="0 0 24 24"><path d="M11 1.500l10.500 6-8 15.500-10.500-6z" fill="url(#ige)" stroke="#222" stroke-width="1" /><path d="M0 23.500h8M16 23.500h8" stroke="#111" stroke-width="1.200"/></svg><svg style="left:16px;top:647px;" width="24" height="24" viewBox="0 0 24 24"><path d="M12 7h6c2 0 3 1 3 3v7M6 17v-4c0-1.500 1-2.500 2.500-2.500" fill="none" stroke="#111" stroke-width="1"/><rect x="6.500" y="1" width="7" height="6.500" fill="#b8c8e4" stroke="#111" stroke-width="1.100"/><rect x="9" y="10.500" width="7.500" height="4.500" fill="#f4d784" stroke="#111" stroke-width="1.100"/><rect x="1" y="17" width="7" height="6" fill="#b8c8e4" stroke="#111" stroke-width="1.100"/><rect x="16" y="17" width="7" height="6" fill="#b8c8e4" stroke="#111" stroke-width="1.100"/></svg><svg style="left:16px;top:683px;" width="26" height="28" viewBox="0 0 26 28"><path d="M14.500 16l3-3 6.500 7.500-3 3z" fill="#e8c45c" stroke="#7a5c18" stroke-width=".9"/><circle cx="9.500" cy="9.500" r="8" fill="#dfe9f4" stroke="#333" stroke-width="1.500"/><path d="M5 8l6-4M6 12l7-5" stroke="#fff" stroke-width="1.500"/></svg><svg style="left:16px;top:712px;" width="24" height="26" viewBox="0 0 24 26"><path d="M1.500 7.500l11-6 10 16.500-11 6z" fill="#f3cbb0" stroke="#222" stroke-width="1.100"/><path d="M3.500 10.500l3-1.600M5 13l2-1.100M6.500 15.500l3-1.600M8 18l2-1.100M9.500 20.500l3-1.600" stroke="#222" stroke-width=".8"/></svg><svg style="left:24px;top:87px;" width="14" height="18" viewBox="0 0 14 18"><rect x="1" y="1" width="10" height="16" fill="#dfe6f2" stroke="#b8c4dc" stroke-width=".8"/><path d="M2.500 3.500h7M2.500 6h7M2.500 8.500h7M2.500 11h7" stroke="#8fa4cc" stroke-width="1.300"/><rect x="2.500" y="12.500" width="4.500" height="3.500" fill="#7f94bc"/><path d="M8.500 13l3.500 3.500M12 13l-3.500 3.500" stroke="#111" stroke-width="1.200"/></svg><svg style="left:54px;top:87px;" width="18" height="18" viewBox="0 0 18 18"><rect x="1" y="1" width="16" height="16" fill="none" stroke="#111" stroke-width="1.300" stroke-dasharray="2 1.300"/><g fill="#f4f4f4" stroke="#222" stroke-width="1"><ellipse cx="9" cy="12.500" rx="5.500" ry="2"/><ellipse cx="9" cy="9.500" rx="5.500" ry="2"/><ellipse cx="9" cy="6.500" rx="5.500" ry="2"/></g></svg><svg style="left:86px;top:87px;" width="18" height="18" viewBox="0 0 18 18"><rect x="1" y="1" width="16" height="16" fill="none" stroke="#d4d4d4" stroke-width="1" stroke-dasharray="1.500 1.200"/><path d="M4 14v-6h3a3.500 3.500 0 1 1 5 0v6z" fill="none" stroke="#d8d8d8" stroke-width="1"/></svg><svg style="left:131px;top:87px;" width="18" height="18" viewBox="0 0 18 18"><path d="M12 3h-3c-2.500 0-4 1.500-4 4v6M2 10l3 4 3-4" fill="none" stroke="#f3e0d0" stroke-width="2"/></svg><svg style="left:163px;top:87px;" width="18" height="18" viewBox="0 0 18 18"><path d="M6 3h3c2.500 0 4 1.500 4 4v6M16 10l-3 4-3-4" fill="none" stroke="#f3e0d0" stroke-width="2"/></svg><svg style="left:195px;top:87px;" width="18" height="18" viewBox="0 0 18 18"><path d="M2 9h14M5 5.500l-3.500 3.500 3.500 3.500M13 5.500l3.500 3.500-3.500 3.500" fill="none" stroke="#f3e0d0" stroke-width="2"/></svg><svg style="left:227px;top:87px;" width="18" height="18" viewBox="0 0 18 18"><path d="M9 2v14M5.500 5l3.500-3.500 3.500 3.500M5.500 13l3.500 3.500 3.500-3.500" fill="none" stroke="#f3e0d0" stroke-width="2"/></svg><svg style="left:272px;top:87px;" width="18" height="18" viewBox="0 0 18 18"><path d="M4 1.500v11M2 10l2 3 2-3M1 15.500h16M8 3h9M8 6h9M8 9h9M8 12h9" fill="none" stroke="#cfcfcf" stroke-width="1.300"/></svg><svg style="left:304px;top:87px;" width="18" height="18" viewBox="0 0 18 18"><path d="M3 4l2.500-2.500 2.500 2.500M5.500 1.500v4M9 3h8M9 6h8M1 10h16M1 13h16M9 16h8" fill="none" stroke="#cfcfcf" stroke-width="1.300"/></svg><svg style="left:336px;top:87px;" width="18" height="18" viewBox="0 0 18 18"><path d="M1 2h8M1 5.500h16M1 9h16M1 12.500h9M1 16h8M13 11l2 3 2-3" fill="none" stroke="#cfcfcf" stroke-width="1.300"/></svg><svg style="left:368px;top:87px;" width="18" height="18" viewBox="0 0 18 18"><path d="M1 2h16M1 5.500h9M1 9h8M1 12.500h8M1 16h8M15 16v-10M13 8l2-3 2 3" fill="none" stroke="#cfcfcf" stroke-width="1.300"/></svg><svg style="left:942px;top:86px;" width="16" height="18" viewBox="0 0 16 18"><path d="M4.500 8v-3c0-3 5.500-3.500 6.500-.5" fill="none" stroke="#222" stroke-width="1.400"/><rect x="2.500" y="8" width="10" height="8" rx="1" fill="#f2e48c" stroke="#222" stroke-width="1.200" transform="rotate(-8 7.500 12)"/><rect x="6.500" y="10.500" width="2" height="3" fill="#222" transform="rotate(-8 7.500 12)"/></svg><svg style="left:1228px;top:85px;" width="20" height="20" viewBox="0 0 20 20"><path d="M1.500 5.500h13.500v6" fill="none" stroke="#111" stroke-width="2.200"/><path d="M3 9h9v4" fill="none" stroke="#111" stroke-width="1.300"/><path d="M4 14.500h9" stroke="#111" stroke-width="1.300" stroke-dasharray="2 1.200"/><path d="M13 11.500l5 3-5 3z" fill="#111"/></svg><svg style="left:1260px;top:85px;" width="20" height="20" viewBox="0 0 20 20"><path d="M1.500 5.500h8c4 0 5.500 2 5.500 6" fill="none" stroke="#111" stroke-width="1.800"/><path d="M3 9h5c3 0 4 1.500 4 4" fill="none" stroke="#111" stroke-width="1.200"/><path d="M4 14.500h9" stroke="#111" stroke-width="1.300" stroke-dasharray="2 1.200"/><path d="M13 11.500l5 3-5 3z" fill="#111"/></svg><svg style="left:1292px;top:85px;" width="20" height="20" viewBox="0 0 20 20"><defs><linearGradient id="ig3" x1="0" y1="0" x2="0" y2="1"><stop offset="0" stop-color="#111"/><stop offset="1" stop-color="#8fa4cc"/></linearGradient></defs><path d="M1.500 4.500h14v9h-12z" fill="url(#ig3)"/><path d="M3 8h10v6h-10z" fill="#f0f0f0"/><path d="M4 14.500h9" stroke="#111" stroke-width="1.300" stroke-dasharray="2 1.200"/><path d="M13 11.500l5 3-5 3z" fill="#111"/></svg><svg style="left:1324px;top:85px;" width="20" height="20" viewBox="0 0 20 20"><path d="M1.500 5h15" stroke="#111" stroke-width="1.200"/><circle cx="3.500" cy="5" r="2" fill="#111"/><circle cx="9" cy="5" r="2" fill="#111"/><circle cx="14.500" cy="5" r="2" fill="#111"/><path d="M2.500 9h13" stroke="#111" stroke-width="1.200" stroke-dasharray="2 1.200"/><path d="M4 14.500h9" stroke="#111" stroke-width="1.300" stroke-dasharray="2 1.200"/><path d="M13 11.500l5 3-5 3z" fill="#111"/></svg><svg style="left:48px;top:121px;" width="16" height="18" viewBox="0 0 16 18"><path d="M4 8.500v-3c0-4.500 8-4.500 8 0v3" fill="none" stroke="#3a3012" stroke-width="1.700"/><rect x="1.500" y="8" width="13" height="9" rx="1.500" fill="#e6c84a" stroke="#5a4810" stroke-width="1.100"/><rect x="2.500" y="9" width="11" height="3" fill="#f6e48c" opacity=".8"/><path d="M8 11v3.500" stroke="#3a2a08" stroke-width="2"/></svg><svg style="left:1164px;top:125px;" width="10" height="10" viewBox="0 0 10 10"><path d="M2.500 1.500h5v7h-5z M3.500 4l1.500-1.500v4.500" fill="none" stroke="#b0b0b0" stroke-width="1"/></svg><svg style="left:1152px;top:131px;" width="10" height="8" viewBox="0 0 10 8"><path d="M1 2h8l-4 5z" fill="#555"/></svg><svg style="left:57px;top:204px;" width="8" height="10" viewBox="0 0 8 10"><path d="M7 1v8M7 5L1 1.500v7z" fill="#444" stroke="#444" stroke-width=".8"/></svg><svg style="left:1839px;top:132px;" width="20" height="20" viewBox="0 0 20 20"><path d="M2 2h11l2 2v14h-13z" fill="#fdfdfd" stroke="#c8c8c8" stroke-width="1"/><circle cx="13.500" cy="12" r="3.800" fill="#eaf2fc" stroke="#2a5a9c" stroke-width="1.400"/><path d="M11.500 12h4M13.500 10v4" stroke="#2a5a9c" stroke-width="1.200"/></svg><svg style="left:1880px;top:133px;" width="18" height="18" viewBox="0 0 18 18"><path d="M4 4l8 8" stroke="#111" stroke-width="1.300"/><path d="M13.500 13.500l-4.500-1.500 3-3z" fill="#111"/><rect x="1.500" y="1.500" width="4.200" height="4.200" transform="rotate(45 3.600 3.600)" fill="#7a6ad8" stroke="#3a2fa0" stroke-width=".9"/><rect x="11.800" y="11.800" width="4.200" height="4.200" transform="rotate(45 13.900 13.900)" fill="#8fd0a0" stroke="#3a8a50" stroke-width=".9"/></svg><svg style="left:1880px;top:178px;" width="18" height="18" viewBox="0 0 18 18"><path d="M4 4l8 8" stroke="#111" stroke-width="1.300"/><path d="M13.500 13.500l-4.500-1.500 3-3z" fill="#111"/><rect x="1.500" y="1.500" width="4.200" height="4.200" transform="rotate(45 3.600 3.600)" fill="#7a6ad8" stroke="#3a2fa0" stroke-width=".9"/><rect x="11.800" y="11.800" width="4.200" height="4.200" transform="rotate(45 13.900 13.900)" fill="#8fd0a0" stroke="#3a8a50" stroke-width=".9"/></svg><svg style="left:1880px;top:351px;" width="18" height="18" viewBox="0 0 18 18"><path d="M4 4l8 8" stroke="#111" stroke-width="1.300"/><path d="M13.500 13.500l-4.500-1.500 3-3z" fill="#111"/><rect x="1.500" y="1.500" width="4.200" height="4.200" transform="rotate(45 3.600 3.600)" fill="#7a6ad8" stroke="#3a2fa0" stroke-width=".9"/><rect x="11.800" y="11.800" width="4.200" height="4.200" transform="rotate(45 13.900 13.900)" fill="#8fd0a0" stroke="#3a8a50" stroke-width=".9"/></svg><div style="left:1874px;top:203px;width:31px;height:31px;border:1px solid #e2e2e2;border-radius:5px;box-sizing:border-box;background:#f2f2f2;"></div><div style="left:1874px;top:235.5px;width:31px;height:31px;border:1px solid #e2e2e2;border-radius:5px;box-sizing:border-box;background:#f2f2f2;"></div><div style="left:1874px;top:267.5px;width:31px;height:31px;border:1px solid #e2e2e2;border-radius:5px;box-sizing:border-box;background:#f2f2f2;"></div><div style="left:1874px;top:299.5px;width:31px;height:31px;border:1px solid #e2e2e2;border-radius:5px;box-sizing:border-box;background:#f2f2f2;"></div><svg style="left:1874px;top:203px;" width="31" height="128" viewBox="0 0 31 128"><g stroke="#dedede" stroke-width="1.200" fill="none"><path d="M8 20h13v-12"/><path d="M8 52h13M19 40v14"/><circle cx="20" cy="52" r="2" fill="#dedede"/><path d="M8 84h13M20 72v12"/><circle cx="20" cy="74" r="2" fill="#dedede"/><path d="M8 116h14M20 104v13"/><circle cx="11" cy="106" r="2"/></g></svg><svg style="left:1846px;top:165px;" width="18" height="210" viewBox="0 0 18 210"><rect x="0" y="4" width="8" height="13" fill="#e8c8a0" stroke="#a88860" stroke-width="1"/><path d="M0 8h6M0 11h6" stroke="#a88860" stroke-width="1"/><path d="M0 38h6l3 3v8" fill="none" stroke="#444" stroke-width="1.100"/><rect x="0" y="47" width="9" height="5" fill="#4a7ac0"/><rect x="0" y="69" width="9" height="15" fill="#333"/><rect x="0" y="72" width="6" height="3" fill="#ddd"/><rect x="0" y="78" width="6" height="4" fill="#eee"/><path d="M0 110h6l4 4v13h-10" fill="#f8f8f8" stroke="#222" stroke-width="1.200"/><path d="M0 118l3 2.500-3 2.500z" fill="#111"/><path d="M0 142h3l3 3v7M6 160v7h-6" fill="none" stroke="#222" stroke-width="1.200"/><path d="M0 155h10M7 152l3.500 3-3.500 3" fill="none" stroke="#111" stroke-width="1.400"/><rect x="0" y="181" width="16" height="22" rx="3" fill="#f4f4ee" stroke="#e2e2e2"/></svg><svg style="left:1890px;top:360px;" width="20" height="480" viewBox="0 0 20 480"><g stroke="#4a78d0" stroke-width="1.600"><path d="M8 36h14"/><path d="M4 104h18"/><path d="M4 170h18"/><path d="M6 359h16"/><path d="M2 413h18"/><path d="M2 428h18"/></g><g stroke="#4a3ab0" stroke-width="1.300"><path d="M7 384v14M10 384v14M4 388h10M4 392h10"/><path d="M8 418v20"/></g><path d="M3 27c3-1 5-3 6-6M3 62c3-1 5-3 6-6M3 97c3-1 5-3 6-6M3 128c3-1 5-3 6-6" fill="none" stroke="#3a7a3a" stroke-width="1.100"/><path d="M2 154l3-5" stroke="#c33" stroke-width="1.500"/><rect x="2" y="216" width="4" height="4" transform="rotate(45 4 218)" fill="#8fd0a0" stroke="#3a8a50" stroke-width=".8"/><path d="M2 300l5 20h-5z" fill="#111"/><rect x="1" y="236" width="5" height="14" fill="none" stroke="#bbb"/><rect x="1" y="340" width="5" height="14" fill="none" stroke="#bbb"/></svg>
<div style="left:346px;top:157px;width:1500px;height:760px;background:#dfdfdf;border-radius:3px 3px 0 0;box-shadow:0 7px 14px 1px rgba(0,0,0,.24);"></div><div style="left:346px;top:157px;width:1500px;height:33px;background:#f0f0f0;border-radius:3px 3px 0 0;"></div><svg style="left:1755px;top:165px;" width="90" height="22" viewBox="0 0 90 22"><path d="M7 13.5h9" stroke="#bcbcbc" stroke-width="2"/><rect x="38.5" y="5" width="8" height="8" fill="none" stroke="#b6b6b6" stroke-width="1.900"/><path d="M71 5l9 9M80 5l-9 9" stroke="#bababa" stroke-width="2.100"/></svg><div style="left:346px;top:190px;width:1500px;height:19px;background:#f4f4f4;"></div><div style="left:346px;top:190px;width:1481px;height:19px;background:linear-gradient(90deg,#d1d1d1 0%,#d1d1d1 33%,#f3f3f3 98%);"></div><svg style="left:1830px;top:193px;" width="13" height="13" viewBox="0 0 13 13"><path d="M2 2l9 9M11 2l-9 9" stroke="#222" stroke-width="1.2"/></svg><div class="t" style="left:352px;top:191px;font-size:12.6px;color:#1e1e1e;line-height:17px;letter-spacing:.35px;"><u>F</u>ile</div><div class="t" style="left:383px;top:191px;font-size:12.6px;color:#1e1e1e;line-height:17px;letter-spacing:.35px;"><u>E</u>dit</div><div class="t" style="left:416px;top:191px;font-size:12.6px;color:#1e1e1e;line-height:17px;letter-spacing:.35px;"><u>V</u>iew</div><div class="t" style="left:454px;top:191px;font-size:12.6px;color:#1e1e1e;line-height:17px;letter-spacing:.35px;"><u>I</u>nsert</div><div class="t" style="left:498px;top:191px;font-size:12.6px;color:#1e1e1e;line-height:17px;letter-spacing:.35px;">F<u>o</u>rmat</div><div class="t" style="left:549px;top:191px;font-size:12.6px;color:#1e1e1e;line-height:17px;letter-spacing:.35px;">Sty<u>l</u>es</div><div class="t" style="left:595px;top:191px;font-size:12.6px;color:#1e1e1e;line-height:17px;letter-spacing:.35px;">T<u>a</u>ble</div><div class="t" style="left:636px;top:191px;font-size:12.6px;color:#1e1e1e;line-height:17px;letter-spacing:.35px;">For<u>m</u></div><div class="t" style="left:676px;top:191px;font-size:12.6px;color:#1e1e1e;line-height:17px;letter-spacing:.35px;"><u>T</u>ools</div><div class="t" style="left:716px;top:191px;font-size:12.6px;color:#1e1e1e;line-height:17px;letter-spacing:.35px;"><u>W</u>indow</div><div class="t" style="left:772px;top:191px;font-size:12.6px;color:#1e1e1e;line-height:17px;letter-spacing:.35px;"><u>H</u>elp</div><div style="left:346px;top:209px;width:1500px;height:86px;background:#f5f5f5;"></div><div style="left:346px;top:209px;width:1454px;height:43px;background:linear-gradient(180deg,#f6f6f6 0%,#eeeeee 9%,#e4e4e4 42%,#d1d1d1 76%,#bdbdbd 100%);"></div><div style="left:346px;top:252px;width:1353px;height:43px;background:linear-gradient(180deg,#f6f6f6 0%,#eeeeee 9%,#e4e4e4 42%,#d1d1d1 76%,#bdbdbd 100%);"></div><div style="left:1699px;top:252px;width:1px;height:43px;background:#fcfcfc;"></div><div style="left:346px;top:295px;width:1438px;height:600px;background:#dfdfdf;"></div><div style="left:667px;top:299px;width:77px;height:17px;background:#c2c2c2;border:1px solid #9c9c9c;box-sizing:border-box;"></div><div style="left:744px;top:299px;width:642px;height:17px;background:#fff;"></div><div style="left:1386px;top:299px;width:76px;height:17px;background:#c2c2c2;border:1px solid #9c9c9c;box-sizing:border-box;"></div><div style="left:666px;top:337px;width:796px;height:560px;background:#fff;border:1px solid #8e8e8e;box-sizing:border-box;"></div><svg style="left:729px;top:399px;" width="16" height="16" viewBox="0 0 16 16"><path d="M14.5 1v13.5H1" fill="none" stroke="#d0d0d0" stroke-width="1.4"/></svg><svg style="left:353px;top:302px;" width="10" height="9" viewBox="0 0 10 9"><path d="M1.5 0v7.5H9" fill="none" stroke="#111" stroke-width="2"/></svg><div style="left:1783px;top:295px;width:63px;height:1px;background:#9a9a9a;"></div><div style="left:1784px;top:296px;width:1px;height:600px;background:#f4f4f4;"></div><div style="left:1785px;top:296px;width:13px;height:600px;background:#bebebe;"></div><div style="left:1785px;top:296px;width:13px;height:14px;background:#c2c2c2;"></div><svg style="left:1785px;top:298px;" width="13" height="9" viewBox="0 0 13 9"><path d="M3 6.500L6.500 1.500L10 6.500Z" fill="#8c8c8c"/><path d="M3.500 7.500h6" stroke="#f0f0f0" stroke-width="1"/></svg><div style="left:1783px;top:310px;width:16px;height:2px;background:#1a1a1a;"></div><div style="left:1784px;top:312px;width:14px;height:1px;background:#f0f0f0;"></div><div style="left:1798px;top:295px;width:2px;height:600px;background:#161616;"></div><div style="left:1800px;top:296px;width:1px;height:600px;background:#f4f4f4;"></div><div style="left:1801px;top:296px;width:4px;height:600px;background:#bebebe;"></div><div style="left:1805px;top:296px;width:1px;height:600px;background:#8c8c8c;"></div><div style="left:1806px;top:296px;width:1px;height:600px;background:#f0f0f0;"></div><div style="left:1807px;top:296px;width:39px;height:600px;background:#bcbcbc;"></div><div style="left:1807px;top:296px;width:39px;height:1px;background:#e8e8e8;"></div><svg style="left:1822px;top:306px;" width="8" height="20" viewBox="0 0 8 20"><rect x="3" y="3" width="2" height="2" fill="#666"/><rect x="3" y="8" width="2" height="2" fill="#666"/><rect x="3" y="13" width="2" height="2" fill="#666"/></svg><div style="left:1816px;top:331px;width:24px;height:1px;background:#c8c8c8;"></div><div style="left:1816px;top:334px;width:24px;height:1px;background:#b0b0b0;"></div><div style="left:346px;top:895px;width:1500px;height:22px;background:linear-gradient(180deg,#c6c6c6,#bdbdbd 60%,#b2b2b2);border-top:1px solid #8a8a8a;box-sizing:border-box;"></div><div style="left:539px;top:898px;width:1px;height:17px;background:#8e8e8e;"></div><div style="left:540px;top:898px;width:1px;height:17px;background:#e4e4e4;"></div><div style="left:793px;top:898px;width:1px;height:17px;background:#8e8e8e;"></div><div style="left:794px;top:898px;width:1px;height:17px;background:#e4e4e4;"></div><div class="t" style="left:356px;top:898.5px;font-size:12px;color:#111;line-height:17px;letter-spacing:-.08px;">Page 1 of 1</div><div class="t" style="left:547px;top:898.5px;font-size:12px;color:#111;line-height:17px;letter-spacing:.16px;">0 words, 0 characters</div><div class="t" style="left:802px;top:898.5px;font-size:12px;color:#111;line-height:17px;letter-spacing:.1px;">Default Page Style</div>
<svg style="left:346px;top:209px;" width="1500" height="42" viewBox="346 209 1500 42"><rect x="350" y="215" width="2" height="1.500" fill="#7a7a7a"/><rect x="350" y="218" width="2" height="1.500" fill="#7a7a7a"/><rect x="350" y="221" width="2" height="1.500" fill="#7a7a7a"/><rect x="350" y="224" width="2" height="1.500" fill="#7a7a7a"/><rect x="350" y="227" width="2" height="1.500" fill="#7a7a7a"/><rect x="350" y="230" width="2" height="1.500" fill="#7a7a7a"/><rect x="350" y="233" width="2" height="1.500" fill="#7a7a7a"/><rect x="350" y="236" width="2" height="1.500" fill="#7a7a7a"/><rect x="350" y="239" width="2" height="1.500" fill="#7a7a7a"/><rect x="350" y="242" width="2" height="1.500" fill="#7a7a7a"/><rect x="350" y="245" width="2" height="1.500" fill="#7a7a7a"/><path d="M365 215h11l13 13v16.500h-24z" fill="#eaf6fc" stroke="#2a5a8c" stroke-width="2" stroke-linejoin="round"/><path d="M382.500 214h7.500v7.500z" fill="#2a5a8c"/><path d="M369 227h4.500M369 231h4.500M369 235h16M369 239h12" stroke="#2a6a8c" stroke-width="1.500"/><rect x="376.500" y="226" width="8.500" height="5.500" fill="#cfe6f4" stroke="#2a5a8c" stroke-width="1.200"/><path d="M398.2 230h7l-3.500 4z" fill="#111"/><path d="M414 239v-19.500h7l3 3.500h11.500v5" fill="#fdf1dc" stroke="#dcae72" stroke-width="1.200" stroke-linejoin="round"/><path d="M413.500 239.500l3.500-12h23.500l-3.500 12z" fill="#f8d27c" stroke="#d99a44" stroke-width="1.200" stroke-linejoin="round"/><path d="M448.0 230h7l-3.500 4z" fill="#111"/><rect x="464.700" y="217.700" width="25" height="25" fill="#d594e4" stroke="#8a3aa0" stroke-width="1.500"/><rect x="467.500" y="219" width="19.500" height="9" fill="#fbf0fd" stroke="#8a3aa0" stroke-width="1"/><rect x="468" y="231" width="17" height="11" fill="#fbf0fd" stroke="#8a3aa0" stroke-width="1"/><rect x="472.500" y="233.500" width="2.500" height="8" fill="#8a3aa0"/><path d="M498.0 230h7l-3.500 4z" fill="#111"/><path d="M511.5 220V241" stroke="#a6a6a6" stroke-width="1"/><path d="M512.5 220V241" stroke="#efefef" stroke-width="1" opacity=".7"/><path d="M525.5 216.5h14.5l7 7v20h-21.5z" fill="#fbfbfb" stroke="#333" stroke-width="1.2" stroke-linejoin="round"/><path d="M540.0 216.5v7h7" fill="none" stroke="#333" stroke-width="1.2" stroke-linejoin="round"/><path d="M536 243c3-3 5.500-8 6-14M541 231c0 4 3 7.500 8.500 7M538.500 238c3-1.500 6-2 9-1" fill="none" stroke="#d24b4b" stroke-width="1.500" stroke-linecap="round" opacity=".9"/><rect x="568.500" y="218.500" width="13.500" height="8" fill="#eaf6fc" stroke="#333" stroke-width="1.100"/><rect x="561.500" y="224.500" width="27.500" height="12" fill="#6e6e6e" stroke="#444" stroke-width="1"/><rect x="567" y="224" width="16.500" height="2.500" fill="#4a86b4"/><path d="M566 226.500h18.500" stroke="#cfe8f8" stroke-width="1"/><rect x="568.500" y="236.500" width="13.500" height="5" fill="#fff" stroke="#333" stroke-width="1.100"/><rect x="585" y="233" width="2" height="1.200" fill="#fff"/><path d="M603.5 216.5h14.5l7 7v20h-21.5z" fill="#fbfbfb" stroke="#333" stroke-width="1.2" stroke-linejoin="round"/><path d="M618.0 216.5v7h7" fill="none" stroke="#333" stroke-width="1.2" stroke-linejoin="round"/><circle cx="618" cy="234" r="4.800" fill="#dff1fa" stroke="#5a93ad" stroke-width="1.400"/><path d="M621.500 237.500l6 6" stroke="#5a93ad" stroke-width="1.500"/><path d="M636.5 220V241" stroke="#a6a6a6" stroke-width="1"/><path d="M637.5 220V241" stroke="#efefef" stroke-width="1" opacity=".7"/><g fill="none" stroke="#b9b9b9" stroke-width="1.500"><path d="M652 217l13 20M671 217l-13 20"/><circle cx="654.500" cy="239.500" r="3.500"/><circle cx="668.500" cy="239.500" r="3.500"/></g><g opacity=".55"><path d="M687.5 216.5h10l5 5v14h-15z" fill="#f2f2f2" stroke="#8a8a8a" stroke-width="1.1" stroke-linejoin="round"/><path d="M697.5 216.5v5h5" fill="none" stroke="#8a8a8a" stroke-width="1.1" stroke-linejoin="round"/><path d="M697.5 224.5h9.5l5 5v14h-14.5z" fill="#f2f2f2" stroke="#8a8a8a" stroke-width="1.1" stroke-linejoin="round"/><path d="M707.0 224.5v5h5" fill="none" stroke="#8a8a8a" stroke-width="1.1" stroke-linejoin="round"/><path d="M690 226h6M690 229h6M690 232h6M700.500 234h9M700.500 237h9M700.500 240h9" stroke="#aaa" stroke-width="1"/></g><rect x="727.500" y="218.500" width="21" height="24.500" rx="1" fill="#fff6e6" stroke="#e6b67a" stroke-width="1.500"/><path d="M734 219.500h8.500M736 218.500c0-3 4.500-3 4.500 0" fill="none" stroke="#333" stroke-width="1.800"/><path d="M739.5 229.5h7.5l3.5 3.5v11.0h-11z" fill="#fff" stroke="#222" stroke-width="1.4" stroke-linejoin="round"/><path d="M747.0 229.5v3.5h3.5" fill="none" stroke="#222" stroke-width="1.4" stroke-linejoin="round"/><path d="M759.2 230h7l-3.500 4z" fill="#111"/><path d="M772.5 220V241" stroke="#a6a6a6" stroke-width="1"/><path d="M773.5 220V241" stroke="#efefef" stroke-width="1" opacity=".7"/><path d="M788 231l6-4 8 6.500-3 9.500h-12z" fill="#f9e6bc" stroke="#e9c386" stroke-width="1"/><path d="M787.500 237.500l13 1.500-1.500 4h-12z" fill="#f2c868"/><path d="M806 217.500l-6.500 11.500" stroke="#2c2c2c" stroke-width="2.600" stroke-linecap="round"/><path d="M793 226.500l10 6.500" stroke="#2c2c2c" stroke-width="2.800" stroke-linecap="round"/><path d="M819.5 220V241" stroke="#a6a6a6" stroke-width="1"/><path d="M820.5 220V241" stroke="#efefef" stroke-width="1" opacity=".7"/><g fill="none" stroke="#cdcdcd" stroke-width="1.500"><path d="M838 220l-6.500 6 6.500 6M831.500 226h16c5 0 8 3.500 8 7.500s-3 7.500-7 7.500"/><path d="M898 220l6.500 6-6.500 6M904.500 226h-16c-5 0-8 3.500-8 7.500s3 7.500 7 7.500"/></g><path d="M864.5 230h7l-3.500 4z" fill="#8a8a8a"/><path d="M914.0 230h7l-3.500 4z" fill="#8a8a8a"/><path d="M927.5 220V241" stroke="#a6a6a6" stroke-width="1"/><path d="M928.5 220V241" stroke="#efefef" stroke-width="1" opacity=".7"/><path d="M948.500 233.500l-9 8.500" stroke="#333" stroke-width="1.800"/><circle cx="954.700" cy="226.700" r="9.300" fill="#f7fbfd" stroke="#333" stroke-width="1.300"/><text x="950.300" y="231.500" font-size="14" fill="#5fa7c9" font-family="Liberation Sans">a</text><text x="960" y="243.500" font-size="13.500" fill="#333" font-family="Liberation Sans">d</text><text x="980" y="231" font-size="14.500" fill="#3a3a3a" font-family="Liberation Sans" textLength="23" lengthAdjust="spacingAndGlyphs">abc</text><path d="M988.500 238l5.500 5 11-11" fill="none" stroke="#58a868" stroke-width="1.700"/><path d="M1033 217.500h-5a7.500 7.500 0 0 0 0 15h5z" fill="#333"/><path d="M1030 217.700h11.500M1030.700 217.500v25.500M1035.500 217.500v25.500" fill="none" stroke="#333" stroke-width="1.400"/><path d="M1052.5 220V241" stroke="#a6a6a6" stroke-width="1"/><path d="M1053.5 220V241" stroke="#efefef" stroke-width="1" opacity=".7"/><rect x="1063.500" y="217.500" width="25.500" height="25" fill="#fff" stroke="#333" stroke-width="1.200"/><rect x="1064" y="218" width="24.500" height="4.500" fill="#7cb2ea"/><path d="M1063.500 222.500h25.500M1063.500 227.500h25.500M1063.500 232.500h25.500M1063.500 237.500h25.500M1070 222.500v20M1076.300 222.500v20M1082.600 222.500v20" stroke="#333" stroke-width="1.100"/><path d="M1096.8 230h7l-3.500 4z" fill="#111"/><rect x="1114.500" y="217.500" width="25" height="25" fill="#fdfdfd" stroke="#333" stroke-width="1.200"/><path d="M1115 242l8-8 3 2.500 7-7.500 6.500 7v6z" fill="#7cb2ea" stroke="#3f74a8" stroke-width=".8"/><circle cx="1120" cy="223" r="2.300" fill="#fbe2c0" stroke="#e2a662" stroke-width="1"/><rect x="1155.200" y="223.500" width="5" height="19" fill="#7cb2ea" stroke="#3f74a8" stroke-width="1"/><rect x="1163.500" y="217.500" width="5" height="25" fill="#f9cf8a" stroke="#e8b264" stroke-width="1"/><rect x="1171.700" y="227.500" width="5" height="15" fill="#6a6a6a" stroke="#444" stroke-width="1"/><rect x="1192.500" y="218.500" width="25" height="23" fill="#fdfdfd" stroke="#333" stroke-width="1.200"/><text x="1194.500" y="234.500" font-size="17" fill="#5a98c0" font-family="Liberation Sans">A</text><path d="M1206 222.500h9M1209 226.500h6M1209 230.500h6M1209 234.500h6M1195.500 238.500h19.500" stroke="#555" stroke-width="1"/><path d="M1227.5 220V241" stroke="#a6a6a6" stroke-width="1"/><path d="M1228.5 220V241" stroke="#efefef" stroke-width="1" opacity=".7"/><path d="M1242.500 217v8.500h21v-8.500M1242.500 243v-10.500h21v10.500" fill="#fdfdfd" stroke="#333" stroke-width="1.300"/><path d="M1245 229h21" stroke="#c64a64" stroke-width="1.200" stroke-dasharray="3.500 1.500"/><path d="M1238.500 226l5 3-5 3z" fill="#c64a64"/><path d="M1279.5 216.5h14.5l7 7v20h-21.5z" fill="#fbfbfb" stroke="#333" stroke-width="1.2" stroke-linejoin="round"/><path d="M1294.0 216.5v7h7" fill="none" stroke="#333" stroke-width="1.2" stroke-linejoin="round"/><path d="M1288.500 232.500h-2v7h2M1295.500 232.500h2v7h-2" fill="none" stroke="#4aa8b8" stroke-width="1.300"/><path d="M1289 236h6.500" stroke="#2f8798" stroke-width="2"/><path d="M1310.8 230h7l-3.500 4z" fill="#111"/><path d="M1327.500 242.500h9.500v-2.500c-4.500-2.500-7-6.500-7-11.500 0-6.500 4-11 9.500-11s9.500 4.500 9.500 11c0 5-2.500 9-7 11.500v2.500h9.500" fill="none" stroke="#444" stroke-width="1.500"/><path d="M1360.8 230h7l-3.500 4z" fill="#111"/><path d="M1374.5 220V241" stroke="#a6a6a6" stroke-width="1"/><path d="M1375.5 220V241" stroke="#efefef" stroke-width="1" opacity=".7"/><path d="M1385 235a12.500 12.500 0 1 1 24 0z" fill="#fbfbfb"/><g fill="none" stroke="#3c3c3c" stroke-width="1.300"><path d="M1385 235a12.500 12.500 0 1 1 24 0"/><path d="M1397 217.500v16M1386 224h22M1384.500 231h25M1391 219.500c-3 4-4 9-3.500 14.500M1403 219.500c3 4 4 9 3.500 14.500"/></g><rect x="1394" y="236.500" width="20" height="8.500" rx="2" fill="#d6e8f6" opacity=".8"/><rect x="1396" y="238" width="7.500" height="5.500" rx="2.500" fill="none" stroke="#6aa8d8" stroke-width="1.400"/><rect x="1405" y="238" width="7.500" height="5.500" rx="2.500" fill="none" stroke="#6aa8d8" stroke-width="1.400"/><path d="M1401 240.700h6.500" stroke="#6aa8d8" stroke-width="1.400"/><path d="M1427.5 216.5h14.5l7 7v20h-21.5z" fill="#fbfbfb" stroke="#333" stroke-width="1.2" stroke-linejoin="round"/><path d="M1442.0 216.5v7h7" fill="none" stroke="#333" stroke-width="1.2" stroke-linejoin="round"/><text x="1439.500" y="235" font-size="11" fill="#c05050" font-family="Liberation Sans">1</text><path d="M1430 234.500h9M1430 237.500h16.500M1430 240.500h16.500" stroke="#d88" stroke-width="1"/><rect x="1464.500" y="217.500" width="12" height="19" fill="#fbfbfb" stroke="#333" stroke-width="1.200"/><rect x="1468.500" y="219.500" width="12" height="20" fill="#fbfbfb" stroke="#333" stroke-width="1.200"/><rect x="1472.500" y="221.500" width="12" height="20.500" fill="#f4fafd" stroke="#333" stroke-width="1.200"/><path d="M1482.500 231h-2.500v11.500h2.500M1487 231h2.500v11.500h-2.500" fill="none" stroke="#6aa0c8" stroke-width="1.300"/><path d="M1484.700 234v7" stroke="#6aa0c8" stroke-width="1.500"/><path d="M1505.5 216.5h14.5l7 7v20h-21.5z" fill="#fbfbfb" stroke="#333" stroke-width="1.2" stroke-linejoin="round"/><path d="M1520.0 216.5v7h7" fill="none" stroke="#333" stroke-width="1.2" stroke-linejoin="round"/><path d="M1518 229v15" stroke="#222" stroke-width="2"/><path d="M1520 229.500l10 5-10 5z" fill="#62a2e2" stroke="#3f74a8" stroke-width=".8"/><path d="M1542.5 216.5h10l5 5v14h-15z" fill="#fbfbfb" stroke="#333" stroke-width="1.2" stroke-linejoin="round"/><path d="M1552.5 216.5v5h5" fill="none" stroke="#333" stroke-width="1.2" stroke-linejoin="round"/><path d="M1552.5 224.5h10.5l5 5v14h-15.5z" fill="#fbfbfb" stroke="#333" stroke-width="1.2" stroke-linejoin="round"/><path d="M1563.0 224.5v5h5" fill="none" stroke="#333" stroke-width="1.2" stroke-linejoin="round"/><path d="M1546 228.500h6M1552 229.500h6v9M1555.500 236.500l2.500 2.500 2.500-2.500M1556 241.500h5" fill="none" stroke="#c64a4a" stroke-width="1"/><path d="M1577.5 220V241" stroke="#a6a6a6" stroke-width="1"/><path d="M1578.5 220V241" stroke="#efefef" stroke-width="1" opacity=".7"/><path d="M1589.500 217.500h25.500v19h-14l-6 5.500v-5.500h-5.500z" fill="#fbfbfb" stroke="#333" stroke-width="1.300" stroke-linejoin="round"/><path d="M1630.5 216.5h14.5l7 7v20h-21.5z" fill="#fbfbfb" stroke="#333" stroke-width="1.2" stroke-linejoin="round"/><path d="M1645.0 216.5v7h7" fill="none" stroke="#333" stroke-width="1.2" stroke-linejoin="round"/><path d="M1633.500 224h4M1639 224h3.500M1633.500 228h7M1642 228h6M1633.500 232h4M1639 232h4M1633.500 236h7M1633.500 240h5" stroke="#e0a060" stroke-width="1"/><path d="M1633.500 228h7M1639 224h3.500M1639 232h4" stroke="#777" stroke-width="1"/><path d="M1641.500 243.500l1.500-5 9.500-9 3.500 3.500-9.500 9z" fill="#62a2e2" stroke="#3a70a8" stroke-width="1"/><path d="M1663.5 220V241" stroke="#a6a6a6" stroke-width="1"/><path d="M1664.5 220V241" stroke="#efefef" stroke-width="1" opacity=".7"/><path d="M1675 217.500l26.500 25" stroke="#bfe0f6" stroke-width="3.400" opacity=".7"/><path d="M1675 217.500l26.500 25" stroke="#46687f" stroke-width="1.100"/><path d="M1726 217.500l12.500 12.300-12.500 12.300-12.500-12.300z" fill="#fdfdfd" stroke="#333" stroke-width="1.300"/><path d="M1747.0 229h7l-3.500 4z" fill="#111"/><circle cx="1782.500" cy="224.200" r="7.300" fill="#fbfbfb" stroke="#333" stroke-width="1.200"/><rect x="1764.500" y="226" width="15.500" height="14" fill="#fbfbfb" stroke="#333" stroke-width="1.200"/><path d="M1780.500 226l8 8-8 8-8-8z" fill="#fbfbfb" stroke="#333" stroke-width="1.200"/></svg><div style="left:358px;top:261px;width:137px;height:24px;background:#fff;border:2px solid #2a2a2a;border-right:1px solid #dcdcdc;border-bottom:1px solid #e8e8e8;box-sizing:border-box;"></div><div style="left:480px;top:263px;width:14px;height:21px;background:#b7b7b7;border-right:2px solid #2e2e2e;border-bottom:2px solid #2e2e2e;border-left:1px solid #d8d8d8;border-top:1px solid #d8d8d8;box-sizing:border-box;"></div><svg style="left:482px;top:269px;" width="10" height="7" viewBox="0 0 10 7"><path d="M1.200 1.500h7.600l-3.800 4.500z" fill="#111"/></svg><div style="left:361px;top:263px;width:119px;height:20px;overflow:hidden;"><div class="t" style="left:1px;top:2px;font-size:12.6px;color:#111;line-height:17px;letter-spacing:-0.19px;">Default Paragraph Style</div></div><div style="left:583px;top:261px;width:137px;height:24px;background:#fff;border:2px solid #2a2a2a;border-right:1px solid #dcdcdc;border-bottom:1px solid #e8e8e8;box-sizing:border-box;"></div><div style="left:705px;top:263px;width:14px;height:21px;background:#b7b7b7;border-right:2px solid #2e2e2e;border-bottom:2px solid #2e2e2e;border-left:1px solid #d8d8d8;border-top:1px solid #d8d8d8;box-sizing:border-box;"></div><svg style="left:707px;top:269px;" width="10" height="7" viewBox="0 0 10 7"><path d="M1.200 1.500h7.600l-3.800 4.500z" fill="#111"/></svg><div style="left:586px;top:263px;width:119px;height:20px;overflow:hidden;"><div class="t" style="left:1px;top:2px;font-size:12.6px;color:#111;line-height:17px;letter-spacing:0.02px;">Liberation Serif</div></div><div style="left:730px;top:261px;width:65px;height:24px;background:#fff;border:2px solid #2a2a2a;border-right:1px solid #dcdcdc;border-bottom:1px solid #e8e8e8;box-sizing:border-box;"></div><div style="left:780px;top:263px;width:14px;height:21px;background:#b7b7b7;border-right:2px solid #2e2e2e;border-bottom:2px solid #2e2e2e;border-left:1px solid #d8d8d8;border-top:1px solid #d8d8d8;box-sizing:border-box;"></div><svg style="left:782px;top:269px;" width="10" height="7" viewBox="0 0 10 7"><path d="M1.200 1.500h7.600l-3.800 4.500z" fill="#111"/></svg><div style="left:733px;top:263px;width:47px;height:20px;overflow:hidden;"><div class="t" style="left:1px;top:2px;font-size:12.6px;color:#111;line-height:17px;letter-spacing:0px;">12 pt</div></div><svg style="left:346px;top:251px;" width="1500" height="44" viewBox="346 251 1500 44"><rect x="350" y="258" width="2" height="1.500" fill="#7a7a7a"/><rect x="350" y="261" width="2" height="1.500" fill="#7a7a7a"/><rect x="350" y="264" width="2" height="1.500" fill="#7a7a7a"/><rect x="350" y="267" width="2" height="1.500" fill="#7a7a7a"/><rect x="350" y="270" width="2" height="1.500" fill="#7a7a7a"/><rect x="350" y="273" width="2" height="1.500" fill="#7a7a7a"/><rect x="350" y="276" width="2" height="1.500" fill="#7a7a7a"/><rect x="350" y="279" width="2" height="1.500" fill="#7a7a7a"/><rect x="350" y="282" width="2" height="1.500" fill="#7a7a7a"/><rect x="350" y="285" width="2" height="1.500" fill="#7a7a7a"/><rect x="350" y="288" width="2" height="1.500" fill="#7a7a7a"/><g transform="translate(502,258)"><path d="M2 24l10.500-21h2l5 21M6 16.500h11.500" fill="none" stroke="#383838" stroke-width="1.600"/><path d="M13 25.500c1-3 3.500-4.500 6-4l1.500 1.500c-1 2.500-3 4.500-7.500 2.500z" fill="#7ab4e6" stroke="#3a70a8" stroke-width=".9"/><path d="M19 21.500l7-10c1.500-2 4-.5 2.800 1.600l-7.300 10.400z" fill="#fdfdfd" stroke="#444" stroke-width="1"/><path d="M2 5.500a4 4 0 0 1 7-2M9 1v3h-3M9.500 7a4 4 0 0 1-7 2M2.500 11.500v-3h3" fill="none" stroke="#5a9ad8" stroke-width="1.300"/></g><g transform="translate(538,258)"><path d="M2 24l10.500-21h2l5 21M6 16.500h11.500" fill="none" stroke="#383838" stroke-width="1.600"/><path d="M13 25.500c1-3 3.500-4.500 6-4l1.500 1.500c-1 2.500-3 4.500-7.500 2.500z" fill="#7ab4e6" stroke="#3a70a8" stroke-width=".9"/><path d="M19 21.500l7-10c1.500-2 4-.5 2.800 1.600l-7.300 10.400z" fill="#fdfdfd" stroke="#444" stroke-width="1"/><g transform="translate(3,0)"><circle cx="5" cy="6" r="2.800" fill="#fde6c0" stroke="#f0a860" stroke-width="1"/><path d="M5 0v2M5 10v2M-1 6h2M9 6h2M.8 1.800l1.400 1.400M7.800 8.800l1.400 1.400M.8 10.200l1.400-1.400M7.800 3.200l1.400-1.400" stroke="#f0a860" stroke-width="1"/></g></g><path d="M578.5 262V284" stroke="#a6a6a6" stroke-width="1"/><path d="M579.5 262V284" stroke="#efefef" stroke-width="1" opacity=".7"/><path d="M799.5 262V284" stroke="#a6a6a6" stroke-width="1"/><path d="M800.5 262V284" stroke="#efefef" stroke-width="1" opacity=".7"/><text x="815" y="283" font-size="27" font-weight="bold" fill="#333" font-family="Liberation Sans">B</text><path d="M860 264h9M857 282h9M865.500 264l-5 18" stroke="#3a3a3a" stroke-width="1.500" fill="none"/><path d="M896 263.500v10.500a6 6 0 0 0 12 0v-10.500" fill="none" stroke="#3a3a3a" stroke-width="1.700"/><path d="M892 282.700h20" stroke="#5a9ad0" stroke-width="1.300"/><path d="M946.500 266.500c-1-2-3-3-5.500-3-3.500 0-5.500 2-5.500 4.500 0 6 11.500 3 11.500 9.500 0 2.500-2.300 4.500-6 4.500-3 0-5-1.200-6-3.300" fill="none" stroke="#3a3a3a" stroke-width="1.700"/><path d="M931 273.500h20" stroke="#5a9ad0" stroke-width="1.200"/><path d="M963.5 262V284" stroke="#a6a6a6" stroke-width="1"/><path d="M964.5 262V284" stroke="#efefef" stroke-width="1" opacity=".7"/><path d="M978 268l9.500 11M987.500 268l-9.500 11" stroke="#333" stroke-width="1.800"/><text x="990" y="270" font-size="10" font-weight="bold" fill="#5a9ad0" font-family="Liberation Sans">2</text><path d="M1017 268l9.500 11M1026.500 268l-9.500 11" stroke="#333" stroke-width="1.800"/><text x="1028.500" y="282.500" font-size="10" font-weight="bold" fill="#5a9ad0" font-family="Liberation Sans">2</text><path d="M1049.5 262V284" stroke="#a6a6a6" stroke-width="1"/><path d="M1050.5 262V284" stroke="#efefef" stroke-width="1" opacity=".7"/><path d="M1063.500 281l8.500-20.500h2l5 13M1067 274h9" fill="none" stroke="#383838" stroke-width="1.600"/><path d="M1061 285h9M1082 285h6" stroke="#222" stroke-width="1.300"/><path d="M1072.500 281.500l9-9 6 6-8 8h-3.500z" fill="#f08a80" stroke="#d23c3c" stroke-width="1"/><path d="M1072.500 281.500l4-4 6 6-3 3h-3.500z" fill="#d83c3c"/><path d="M1096.5 262V284" stroke="#a6a6a6" stroke-width="1"/><path d="M1097.5 262V284" stroke="#efefef" stroke-width="1" opacity=".7"/><path d="M1113.500 278l6-15h1.300l6 15M1115.500 273h9" fill="none" stroke="#383838" stroke-width="1.500"/><rect x="1104" y="281" width="32" height="7.700" fill="#c81e1e"/><path d="M1141.2 272.5h7l-3.500 4z" fill="#111"/><rect x="1157" y="260" width="19" height="13.500" fill="#e9a458"/><text x="1158.500" y="271.500" font-size="12.500" fill="#fdf0dc" font-family="Liberation Sans" font-weight="bold">ab</text><rect x="1153" y="280" width="33.700" height="8" fill="#ffff20"/><path d="M1166 279.500l1.500-4 11-10.500 4 4-11 10.500z" fill="#fdfdfd" stroke="#333" stroke-width="1.100"/><path d="M1166 279.500l1.500-4.500 4 1 2 3z" fill="#222"/><path d="M1191.2 272.5h7l-3.500 4z" fill="#111"/><path d="M1204.5 262V284" stroke="#a6a6a6" stroke-width="1"/><path d="M1205.5 262V284" stroke="#efefef" stroke-width="1" opacity=".7"/><rect x="1209.500" y="254.500" width="38" height="37.500" rx="1.500" fill="#e9e9e9" fill-opacity=".6" stroke="#c9c9c9" stroke-width="1"/><path d="M1218.0 262.5h22.0" stroke="#333" stroke-width="1"/><path d="M1218.0 265.5h12.8" stroke="#333" stroke-width="1"/><path d="M1218.0 271.5h22.0" stroke="#333" stroke-width="1"/><path d="M1218.0 274.5h12.8" stroke="#333" stroke-width="1"/><path d="M1218.0 280.5h22.0" stroke="#333" stroke-width="1"/><path d="M1218.0 283.5h12.8" stroke="#333" stroke-width="1"/><path d="M1257.5 262.5h21.5" stroke="#333" stroke-width="1"/><path d="M1262.0 265.5h12.5" stroke="#333" stroke-width="1"/><path d="M1257.5 271.5h21.5" stroke="#333" stroke-width="1"/><path d="M1262.0 274.5h12.5" stroke="#333" stroke-width="1"/><path d="M1257.5 280.5h21.5" stroke="#333" stroke-width="1"/><path d="M1262.0 283.5h12.5" stroke="#333" stroke-width="1"/><path d="M1296.0 262.5h22.0" stroke="#333" stroke-width="1"/><path d="M1305.2 265.5h12.8" stroke="#333" stroke-width="1"/><path d="M1296.0 271.5h22.0" stroke="#333" stroke-width="1"/><path d="M1305.2 274.5h12.8" stroke="#333" stroke-width="1"/><path d="M1296.0 280.5h22.0" stroke="#333" stroke-width="1"/><path d="M1305.2 283.5h12.8" stroke="#333" stroke-width="1"/><path d="M1335.0 262.5h22.0" stroke="#333" stroke-width="1"/><path d="M1335.0 265.5h22.0" stroke="#333" stroke-width="1"/><path d="M1335.0 271.5h22.0" stroke="#333" stroke-width="1"/><path d="M1335.0 274.5h22.0" stroke="#333" stroke-width="1"/><path d="M1335.0 280.5h22.0" stroke="#333" stroke-width="1"/><path d="M1335.0 283.5h22.0" stroke="#333" stroke-width="1"/><path d="M1368.5 262V284" stroke="#a6a6a6" stroke-width="1"/><path d="M1369.5 262V284" stroke="#efefef" stroke-width="1" opacity=".7"/><circle cx="1382.500" cy="263.5" r="2.400" fill="#4a8ab8"/><path d="M1389 262.5h15M1389 265.5h9" stroke="#333" stroke-width="1"/><circle cx="1382.500" cy="273.5" r="2.400" fill="#4a8ab8"/><path d="M1389 272.5h15M1389 275.5h9" stroke="#333" stroke-width="1"/><circle cx="1382.500" cy="283.5" r="2.400" fill="#4a8ab8"/><path d="M1389 282.5h15M1389 285.5h9" stroke="#333" stroke-width="1"/><path d="M1413.5 272.5h7l-3.500 4z" fill="#111"/><text x="1429" y="267.5" font-size="11.500" fill="#5a98c8" font-family="Liberation Sans">1</text><path d="M1439 262.5h15M1439 265.5h9" stroke="#333" stroke-width="1"/><text x="1429" y="277.5" font-size="11.500" fill="#5a98c8" font-family="Liberation Sans">2</text><path d="M1439 272.5h15M1439 275.5h9" stroke="#333" stroke-width="1"/><text x="1429" y="287.5" font-size="11.500" fill="#5a98c8" font-family="Liberation Sans">3</text><path d="M1439 282.5h15M1439 285.5h9" stroke="#333" stroke-width="1"/><path d="M1463.0 272.5h7l-3.500 4z" fill="#111"/><path d="M1476.5 262V284" stroke="#a6a6a6" stroke-width="1"/><path d="M1477.5 262V284" stroke="#efefef" stroke-width="1" opacity=".7"/><path d="M1488 260.500h26M1488 264.500h26M1488 281.500h26M1488 285.500h26M1503 268.500h11M1503 272.500h11M1503 276.500h11" stroke="#333" stroke-width="1"/><path d="M1488 273.500h12.500M1496 269l4.500 4.500-4.500 4.500" fill="none" stroke="#4d8ab4" stroke-width="1.300"/><path d="M1527 260.500h26M1527 264.500h26M1527 281.500h26M1527 285.500h26M1542 268.500h11M1542 272.500h11M1542 276.500h11" stroke="#333" stroke-width="1"/><path d="M1527.5 273.500h12.500M1532 269l-4.500 4.500 4.500 4.500" fill="none" stroke="#4d8ab4" stroke-width="1.300"/><path d="M1562.5 262V284" stroke="#a6a6a6" stroke-width="1"/><path d="M1563.5 262V284" stroke="#efefef" stroke-width="1" opacity=".7"/><path d="M1578.600 260.500v25M1573.500 265.500l5-5 5 5M1573.500 280.500l5 5 5-5" fill="none" stroke="#4d8ab4" stroke-width="1.300"/><path d="M1587 264.500h12M1587 268.500h12M1587 277.500h12M1587 281.500h12" stroke="#333" stroke-width="1"/><path d="M1607.0 272.5h7l-3.500 4z" fill="#111"/><path d="M1643.600 260.500v25M1638.500 265.500l5-5 5 5M1638.500 280.500l5 5 5-5" fill="none" stroke="#4d8ab4" stroke-width="1.300"/><path d="M1624 265.500h12M1624 269.500h12M1624 276.500h12M1624 280.500h12" stroke="#333" stroke-width="1"/><g stroke="#c9c9c9" stroke-width="1" fill="none"><path d="M1663 265.500h12M1663 269.500h12M1663 276.500h12M1663 280.500h12M1682.500 259.500v27M1677.500 264l5 5 5-5M1677.500 282l5-5 5 5"/></g></svg><svg style="left:346px;top:295px;" width="1500" height="25" viewBox="346 295 1500 25"><path d="M738.500 299.500h10.500l-10.500 15.500h10.500z" fill="#fff" stroke="#111" stroke-width="1.300" stroke-linejoin="round"/><path d="M1381 315l5.500-7.500 5.500 7.500z" fill="#fff" stroke="#111" stroke-width="1.300" stroke-linejoin="round"/><text x="702.1" y="309" font-size="10.500" fill="#1c1c1c" font-family="Liberation Sans">1</text><text x="777.7" y="309" font-size="10.500" fill="#1c1c1c" font-family="Liberation Sans">1</text><text x="815.5" y="309" font-size="10.500" fill="#1c1c1c" font-family="Liberation Sans">2</text><text x="853.3" y="309" font-size="10.500" fill="#1c1c1c" font-family="Liberation Sans">3</text><text x="891.1" y="309" font-size="10.500" fill="#1c1c1c" font-family="Liberation Sans">4</text><text x="928.9" y="309" font-size="10.500" fill="#1c1c1c" font-family="Liberation Sans">5</text><text x="966.7" y="309" font-size="10.500" fill="#1c1c1c" font-family="Liberation Sans">6</text><text x="1004.5" y="309" font-size="10.500" fill="#1c1c1c" font-family="Liberation Sans">7</text><text x="1042.3" y="309" font-size="10.500" fill="#1c1c1c" font-family="Liberation Sans">8</text><text x="1080.1" y="309" font-size="10.500" fill="#1c1c1c" font-family="Liberation Sans">9</text><text x="1114.8" y="309" font-size="10.500" fill="#1c1c1c" font-family="Liberation Sans">10</text><text x="1152.6" y="309" font-size="10.500" fill="#1c1c1c" font-family="Liberation Sans">11</text><text x="1190.4" y="309" font-size="10.500" fill="#1c1c1c" font-family="Liberation Sans">12</text><text x="1228.2" y="309" font-size="10.500" fill="#1c1c1c" font-family="Liberation Sans">13</text><text x="1266.0" y="309" font-size="10.500" fill="#1c1c1c" font-family="Liberation Sans">14</text><text x="1303.8" y="309" font-size="10.500" fill="#1c1c1c" font-family="Liberation Sans">15</text><text x="1341.6" y="309" font-size="10.500" fill="#1c1c1c" font-family="Liberation Sans">16</text><text x="1379.4" y="309" font-size="10.500" fill="#1c1c1c" font-family="Liberation Sans">17</text><text x="1417.2" y="309" font-size="10.500" fill="#1c1c1c" font-family="Liberation Sans">18</text><path d="M724.1 305v3" stroke="#555" stroke-width="1"/><path d="M761.9 305v3" stroke="#555" stroke-width="1"/><path d="M799.7 305v3" stroke="#555" stroke-width="1"/><path d="M837.5 305v3" stroke="#555" stroke-width="1"/><path d="M875.3 305v3" stroke="#555" stroke-width="1"/><path d="M913.1 305v3" stroke="#555" stroke-width="1"/><path d="M950.9 305v3" stroke="#555" stroke-width="1"/><path d="M988.7 305v3" stroke="#555" stroke-width="1"/><path d="M1026.5 305v3" stroke="#555" stroke-width="1"/><path d="M1064.3 305v3" stroke="#555" stroke-width="1"/><path d="M1102.1 305v3" stroke="#555" stroke-width="1"/><path d="M1139.9 305v3" stroke="#555" stroke-width="1"/><path d="M1177.7 305v3" stroke="#555" stroke-width="1"/><path d="M1215.5 305v3" stroke="#555" stroke-width="1"/><path d="M1253.3 305v3" stroke="#555" stroke-width="1"/><path d="M1291.1 305v3" stroke="#555" stroke-width="1"/><path d="M1328.9 305v3" stroke="#555" stroke-width="1"/><path d="M1366.7 305v3" stroke="#555" stroke-width="1"/><path d="M1404.5 305v3" stroke="#555" stroke-width="1"/><path d="M788.0 315.500h6M791.0 312v3.500" stroke="#111" stroke-width="1.200"/><path d="M835.1 315.500h6M838.1 312v3.500" stroke="#111" stroke-width="1.200"/><path d="M882.4 315.500h6M885.4 312v3.500" stroke="#111" stroke-width="1.200"/><path d="M929.5 315.500h6M932.5 312v3.500" stroke="#111" stroke-width="1.200"/><path d="M976.8 315.500h6M979.8 312v3.500" stroke="#111" stroke-width="1.200"/><path d="M1024.0 315.500h6M1027.0 312v3.500" stroke="#111" stroke-width="1.200"/><path d="M1071.2 315.500h6M1074.2 312v3.500" stroke="#111" stroke-width="1.200"/><path d="M1118.3 315.500h6M1121.3 312v3.500" stroke="#111" stroke-width="1.200"/><path d="M1165.5 315.500h6M1168.5 312v3.500" stroke="#111" stroke-width="1.200"/><path d="M1212.8 315.500h6M1215.8 312v3.500" stroke="#111" stroke-width="1.200"/><path d="M1260.0 315.500h6M1263.0 312v3.500" stroke="#111" stroke-width="1.200"/><path d="M1307.2 315.500h6M1310.2 312v3.500" stroke="#111" stroke-width="1.200"/><path d="M1354.3 315.500h6M1357.3 312v3.500" stroke="#111" stroke-width="1.200"/></svg><svg style="left:1815px;top:342px;" width="24" height="24" viewBox="0 0 24 24"><rect x="1.500" y="1.500" width="20" height="21" fill="#fdfdfd" stroke="#333" stroke-width="1.300"/><rect x="1.500" y="1.500" width="20" height="4.500" fill="#6e6e6e"/><path d="M4.500 11.500h14M4.500 17h14" stroke="#2f7f9c" stroke-width="1.300"/><circle cx="14" cy="11.500" r="1.800" fill="#6ab8d8" stroke="#2f7f9c" stroke-width=".8"/><circle cx="9" cy="17" r="1.800" fill="#6ab8d8" stroke="#2f7f9c" stroke-width=".8"/></svg>
<div style="left:872px;top:365px;width:1020px;height:700px;background:#454545;border-radius:5px 5px 0 0;box-shadow:0 8px 18px 2px rgba(0,0,0,.28);"></div><div style="left:872px;top:365px;width:1020px;height:32px;background:#f0f0f0;border-radius:5px 5px 0 0;"></div><svg style="left:1800px;top:370px;" width="90" height="24" viewBox="0 0 90 24"><path d="M7 14.5h9" stroke="#555" stroke-width="1.8"/><rect x="40.5" y="6.5" width="8" height="8" fill="none" stroke="#444" stroke-width="1.7"/><path d="M71.5 6.500l9 9M80.500 6.500l-9 9" stroke="#444" stroke-width="1.8"/></svg><div class="t" style="left:878px;top:401px;font-size:13.4px;color:#ececec;line-height:17px;letter-spacing:.1px;">File</div><div class="t" style="left:910px;top:401px;font-size:13.4px;color:#ececec;line-height:17px;letter-spacing:.1px;">Edit</div><div class="t" style="left:944px;top:401px;font-size:13.4px;color:#ececec;line-height:17px;letter-spacing:.1px;">Select</div><div class="t" style="left:992px;top:401px;font-size:13.4px;color:#ececec;line-height:17px;letter-spacing:.1px;">View</div><div class="t" style="left:1032px;top:401px;font-size:13.4px;color:#ececec;line-height:17px;letter-spacing:.1px;">Image</div><div class="t" style="left:1081px;top:401px;font-size:13.4px;color:#ececec;line-height:17px;letter-spacing:.1px;">Layer</div><div class="t" style="left:1125px;top:401px;font-size:13.4px;color:#ececec;line-height:17px;letter-spacing:.1px;">Colors</div><div class="t" style="left:1178px;top:401px;font-size:13.4px;color:#ececec;line-height:17px;letter-spacing:.1px;">Tools</div><div class="t" style="left:1222px;top:401px;font-size:13.4px;color:#ececec;line-height:17px;letter-spacing:.1px;">Filters</div><div class="t" style="left:1270px;top:401px;font-size:13.4px;color:#ececec;line-height:17px;letter-spacing:.1px;">Windows</div><div class="t" style="left:1337px;top:401px;font-size:13.4px;color:#ececec;line-height:17px;letter-spacing:.1px;">Help</div><div style="left:872px;top:656px;width:188px;height:400px;background:#454545;border-top:1px solid #5a5a5a;border-right:1px solid #5a5a5a;box-sizing:border-box;"></div><div style="left:877px;top:659px;width:180px;height:400px;background:#3c3c3c;"></div><div style="left:872px;top:628px;width:28px;height:29px;background:#454545;border:1px solid #585858;border-bottom:none;box-sizing:border-box;"></div><div style="left:900px;top:632px;width:26px;height:24px;background:#2c2c2c;"></div><div style="left:927px;top:632px;width:26px;height:24px;background:#2c2c2c;"></div><div style="left:879px;top:663px;width:174px;height:46px;background:#515151;"></div><div class="t" style="left:883.5px;top:667px;font-size:10.3px;font-weight:bold;color:#e8e8e8;line-height:15px;">Core Pointer</div><div style="left:907px;top:685px;width:20px;height:20px;background:#fff;"></div><div style="left:931px;top:685px;width:20px;height:20px;background:#000;"></div><div style="left:963px;top:597px;width:22px;height:22px;background:#000;border:1px solid #fff;box-sizing:border-box;"></div><div style="left:946px;top:582px;width:24px;height:24px;background:#fff;border:1px solid #454545;box-sizing:border-box;"></div><div style="left:946px;top:608px;width:8px;height:7px;background:#000;border:1px solid #fff;box-sizing:border-box;"></div><div style="left:951px;top:613px;width:7px;height:7px;background:#fff;"></div><div style="left:1689px;top:424px;width:1px;height:700px;background:#5a5a5a;"></div><svg style="left:1060px;top:800px;" width="640" height="240" viewBox="0 0 640 240"><path d="M464 26 C440 100 360 170 233 201 Q248 215 258 236 L471 236 C474 150 472 80 464 26Z" fill="#5a5a5a"/><path d="M2 146 C30 178 70 196 122 203 Q108 218 99 236 L60 236 Q40 215 2 211Z" fill="#5a5a5a"/></svg><div style="left:1690px;top:424px;width:29px;height:29px;background:#454545;border:1px solid #5a5a5a;border-bottom:none;box-sizing:border-box;"></div><div style="left:1720px;top:428px;width:26px;height:24px;background:#2c2c2c;"></div><div style="left:1748px;top:428px;width:26px;height:24px;background:#2c2c2c;"></div><div style="left:1775px;top:428px;width:26px;height:24px;background:#2c2c2c;"></div><div style="left:1802px;top:428px;width:26px;height:24px;background:#2c2c2c;"></div><div style="left:1690px;top:452px;width:202px;height:1px;background:#5a5a5a;"></div><div style="left:1694px;top:455px;width:194px;height:40px;background:#3b3b3b;"></div><div style="left:1700px;top:463px;width:181px;height:25px;background:#2a2a2a;"></div><div class="t" style="left:1705px;top:468px;font-size:11.4px;font-style:italic;color:#6e6e6e;line-height:15px;">filter</div><svg style="left:1860px;top:471px;" width="12" height="8" viewBox="0 0 12 8"><path d="M1.500 1.500l4.500 4.500l4.500-4.500" fill="none" stroke="#eee" stroke-width="1.8"/></svg><div class="t" style="left:1694px;top:493px;font-size:11.2px;font-style:italic;color:#d8d8d8;line-height:15px;letter-spacing:-.1px;white-space:nowrap;">2. Hardness 100 (51 × 51)</div><div style="left:1695px;top:509px;width:170px;height:162px;background:#fff;"></div><div style="left:1865px;top:509px;width:10px;height:162px;background:#3b3b3b;"></div><div style="left:1875px;top:509px;width:12px;height:162px;background:#2c2c2c;"></div><div style="left:1876px;top:510px;width:10px;height:62px;background:#6c6c6c;border-radius:2px;"></div><div style="left:1694px;top:671px;width:194px;height:40px;background:#3b3b3b;"></div><div style="left:1700px;top:678px;width:181px;height:25px;background:#2a2a2a;"></div><div class="t" style="left:1706px;top:683px;font-size:11.2px;color:#e6e6e6;line-height:15px;letter-spacing:.2px;">Basic,</div><svg style="left:1860px;top:686px;" width="12" height="8" viewBox="0 0 12 8"><path d="M1.500 1.500l4.500 4.500l4.500-4.500" fill="none" stroke="#eee" stroke-width="1.8"/></svg><div style="left:1694px;top:709px;width:194px;height:25px;background:#2f2f2f;border:1px solid #7c7c7c;box-sizing:border-box;"></div><div style="left:1695px;top:710px;width:6px;height:23px;background:#666;"></div><div class="t" style="left:1697px;top:714px;font-size:11.2px;color:#e6e6e6;line-height:15px;">Spacing</div><div class="t" style="left:1835px;top:714px;font-size:11.2px;color:#e6e6e6;line-height:15px;width:26px;text-align:right;">10.0</div><div style="left:1867px;top:710px;width:20px;height:23px;background:#3c3c3c;"></div><svg style="left:1871px;top:713px;" width="10" height="18" viewBox="0 0 10 18"><path d="M1.500 6l3.500-3.500l3.500 3.500M1.500 12l3.500 3.500l3.500-3.500" fill="none" stroke="#ddd" stroke-width="1.6"/></svg><svg style="left:1780px;top:769px;" width="20" height="4" viewBox="0 0 20 4"><path d="M1 2h4M8 2h4M15 2h4" stroke="#bbb" stroke-width="1.4"/></svg><div style="left:1690px;top:772px;width:202px;height:1px;background:#555;"></div><div style="left:1690px;top:775px;width:27px;height:29px;background:#454545;border:1px solid #5a5a5a;border-bottom:none;box-sizing:border-box;"></div><div style="left:1717px;top:779px;width:26px;height:24px;background:#2c2c2c;"></div><div style="left:1743px;top:779px;width:26px;height:24px;background:#2c2c2c;"></div><div style="left:1690px;top:803px;width:202px;height:1px;background:#5a5a5a;"></div><div style="left:1695px;top:809px;width:145px;height:27px;background:#2b2b2b;border:1px solid #222;border-radius:3px;box-sizing:border-box;"></div><div style="left:1842px;top:809px;width:45px;height:27px;background:#2b2b2b;border:1px solid #222;border-radius:3px;box-sizing:border-box;"></div><div class="t" style="left:1701px;top:815px;font-size:11.2px;color:#6a6a6a;line-height:15px;letter-spacing:.3px;">Mode</div><div class="t" style="left:1777px;top:815px;font-size:11.6px;color:#6a6a6a;line-height:15px;">Normal</div><svg style="left:1820px;top:818px;" width="14" height="9" viewBox="0 0 14 9"><path d="M1.500 1.500l5.500 5.500l5.500-5.500" fill="none" stroke="#eee" stroke-width="1.8"/></svg><svg style="left:1867px;top:818px;" width="14" height="9" viewBox="0 0 14 9"><path d="M1.500 1.500l5.500 5.500l5.500-5.500" fill="none" stroke="#eee" stroke-width="1.8"/></svg><div style="left:1695px;top:838px;width:171px;height:23px;background:linear-gradient(180deg,#5a5a5a,#4e4e4e);"></div><div style="left:1866px;top:838px;width:1px;height:23px;background:#222;"></div><div class="t" style="left:1697px;top:843px;font-size:11.2px;color:#eee;line-height:15px;">Opacity</div><div class="t" style="left:1825.5px;top:843px;font-size:11.2px;color:#eee;line-height:15px;width:36px;text-align:right;">100.0</div><svg style="left:1871px;top:841px;" width="10" height="18" viewBox="0 0 10 18"><path d="M1.500 6l3.500-3.500l3.500 3.500M1.500 12l3.500 3.500l3.500-3.500" fill="none" stroke="#5c5c5c" stroke-width="1.6"/></svg><div class="t" style="left:1694px;top:872px;font-size:11.6px;color:#9a9a9a;line-height:15px;">Lock:</div><div style="left:1695px;top:895px;width:192px;height:200px;background:#303030;"></div><svg style="left:1058px;top:764px;" width="5" height="20" viewBox="0 0 5 20"><path d="M2.500 1v3M2.500 7v3M2.500 13v3" stroke="#ccc" stroke-width="1.4"/></svg><svg style="left:1686px;top:764px;" width="5" height="20" viewBox="0 0 5 20"><path d="M2.500 1v3M2.500 7v3M2.500 13v3" stroke="#ccc" stroke-width="1.4"/></svg>
<svg style="left:872px;top:415px;" width="190" height="300" viewBox="872 415 190 300"><clipPath id="wc"><path d="M880.500 422h168l-3 26h-165z"/></clipPath><g clip-path="url(#wc)"><rect x="880" y="422" width="170" height="26" fill="#4d4d4d"/><path d="M1000 422h50v26h-52z" fill="#555"/><circle cx="894" cy="441" r="13.500" fill="#525252"/><ellipse cx="894" cy="442" rx="6" ry="8.500" fill="#424242"/><path d="M900 430c10 2 18 10 30 10v-18h-30z" fill="#484848"/><circle cx="940" cy="436" r="15.500" fill="#3f3f3f"/><circle cx="942.500" cy="436" r="6" fill="#565656"/><circle cx="980" cy="437" r="21" fill="#3f3f3f"/><circle cx="983" cy="438.500" r="10.500" fill="#555"/></g><g transform="translate(889.8,466)" fill="#c9c9c9" stroke="none"><path d="M0-9l3.500 4h-2.300v3.800h3.800v-2.300l4 3.500-4 3.500v-2.300h-3.800v3.800h2.300l-3.500 4-3.500-4h2.300v-3.800h-3.800v2.300l-4-3.500 4-3.500v2.300h3.800v-3.800h-2.300z"/></g><path d="M905.8 478v-4l-4 4z" fill="#e4e4e4"/><g transform="translate(926.5,466)"><rect x="-8" y="-6" width="16" height="12" fill="none" stroke="#c9c9c9" stroke-width="1.200" stroke-dasharray="1.200 1"/><rect x="-5" y="-3" width="10" height="6" fill="#c9c9c9"/></g><path d="M942.5 478v-4l-4 4z" fill="#e4e4e4"/><g transform="translate(964,466)" fill="none" stroke="#c9c9c9" stroke-width="1.800"><ellipse cx="0" cy="-2.500" rx="7.500" ry="5"/><path d="M-4.500 1.500c2 0 4 1.500 3.500 4.500-.3 1.500-1.500 2.200-3 2.200"/></g><path d="M980 478v-4l-4 4z" fill="#e4e4e4"/><g transform="translate(1001.5,466)"><path d="M-4-3l11 10" stroke="#c9c9c9" stroke-width="2" stroke-linecap="round"/><path d="M-6-8l1.200 2.500 2.800-.5-1.800 2.200 1.500 2.400-2.700-.7-1.900 2.100-.1-2.800-2.600-1.100 2.600-1z" fill="#c9c9c9"/></g><path d="M1017.5 478v-4l-4 4z" fill="#e4e4e4"/><g transform="translate(1038,466)" fill="none" stroke="#c9c9c9" stroke-width="2"><path d="M-5.500-8v13.500h13.500M-8-5.500h13.500v13.500"/></g><g transform="translate(889.8,498)"><path d="M-9-8.500h18v5.500h-6v12.500h-5.500v-4l2-2.500-2-3.500v-2.500h-6.500z" fill="#c9c9c9"/><path d="M3-8.500l-6 12" stroke="#454545" stroke-width="1"/><path d="M-9 1v3.500h5M-5.500 2l2.500 2.500-2.500 2.500" fill="none" stroke="#c9c9c9" stroke-width="1.500"/></g><path d="M905.8 510v-4l-4 4z" fill="#e4e4e4"/><g transform="translate(926.5,498)"><path d="M-9 9v-8.500c4-.5 5.500-3 6.500-5.500 1.500-3.500 6-4.500 9-2-2.500-.8-4.500 0-5 2 1.500-1 3.500-.3 3.500 1.500-1.200-.7-2.500-.3-2.800.8.500 2 2.800 3.200 6.800 3.500v8.200z" fill="#c9c9c9"/></g><path d="M942.5 510v-4l-4 4z" fill="#e4e4e4"/><g transform="translate(964,498)"><path d="M-6.500-1l7-5 6.500 8.500-7.500 5.500z" fill="#c9c9c9"/><path d="M-6.500-1l-1.500 1v7l2.500-1.500z" fill="#8a8a8a"/><path d="M1-9v8" stroke="#c9c9c9" stroke-width="2.200" stroke-linecap="round"/></g><path d="M980 510v-4l-4 4z" fill="#e4e4e4"/><g transform="translate(1001.5,498)"><path d="M7.500-8.500l-9 12" stroke="#c9c9c9" stroke-width="2.200" stroke-linecap="round"/><path d="M-3 3l2.500 2c-1.500 3-4.500 4-8 3.500 2.500-1 3.500-3 5.500-5.500z" fill="#c9c9c9"/></g><path d="M1017.5 510v-4l-4 4z" fill="#e4e4e4"/><g transform="translate(1038,498)"><path d="M2-7.500l5.500 5-4 4.500-5.500-5z" fill="#c9c9c9"/><path d="M-3-2l5.500 5-2.500 2.800-5.500-5z" fill="#8f8f8f"/><path d="M-9 9h7M0 9h8.500" stroke="#c9c9c9" stroke-width="1.500"/></g><g transform="translate(889.8,530.5)" fill="#c9c9c9"><circle cx="0" cy="-5.500" r="2.800"/><path d="M-1.500-4h3l1 5h4.500l1.500 2.500v3h-17v-3l1.500-2.500h4.500z"/><path d="M-2 2.500h4l-2 2.500z" fill="#454545"/></g><path d="M905.8 542.5v-4l-4 4z" fill="#e4e4e4"/><g transform="translate(926.5,530.5)"><ellipse cx="1.500" cy="-2.500" rx="7" ry="6" fill="#c9c9c9"/><path d="M-2 0c1-2.500 3.500-3.500 5.500-2.500M0 2.500c1-2 3-3 5.500-2" stroke="#454545" stroke-width="1" fill="none"/><path d="M-2 1.500l-5.500 6" stroke="#c9c9c9" stroke-width="2.600" stroke-linecap="round"/></g><path d="M942.5 542.5v-4l-4 4z" fill="#e4e4e4"/><g transform="translate(964,530.5)"><path d="M-6.500-7v14" stroke="#c9c9c9" stroke-width="1.600"/><circle cx="-6.500" cy="-7.500" r="2" fill="#c9c9c9"/><circle cx="-6.500" cy="0" r="1.800" fill="#c9c9c9"/><circle cx="-6.500" cy="7.500" r="2" fill="#c9c9c9"/><path d="M-5-3c1.500-4 5-5.500 9-5.500M2.500-10.500l2.500 2-2.500 2" fill="none" stroke="#c9c9c9" stroke-width="1.300"/><rect x="2" y="-4" width="6.500" height="2.500" fill="#c9c9c9"/><rect x="1" y="-.5" width="8.500" height="9" rx="1" fill="#c9c9c9"/></g><text x="993.0" y="539.5" font-size="24" font-weight="bold" fill="#c9c9c9" font-family="Liberation Sans">A</text><g transform="translate(1038,530.5)"><path d="M5.500-7l-8 11" stroke="#c9c9c9" stroke-width="3.600" stroke-linecap="round"/><path d="M-2.500 3.500l-3 4" stroke="#c9c9c9" stroke-width="1.600" stroke-linecap="round"/><circle cx="-6" cy="8" r="1.300" fill="#c9c9c9"/></g><path d="M1061 542.5v-4l-4 4z" fill="#e4e4e4"/><g transform="translate(889.8,562)" fill="none" stroke="#c9c9c9"><circle cx="-2" cy="-2" r="5.500" stroke-width="2.200"/><path d="M2.500 2.500l5 5" stroke-width="2.600" stroke-linecap="round"/></g><path d="M976 586.500h5.500v6.500M978.500 583.500l-3 3 3 3M978.500 590.500l3 3 3-3" fill="none" stroke="#c9c9c9" stroke-width="1.500"/><path d="M878 648l9-12" stroke="#c9c9c9" stroke-width="1.600"/><circle cx="889" cy="646" r="4.800" fill="#c9c9c9"/><path d="M889 645v4M889 642.500v1" stroke="#454545" stroke-width="1.500"/><path d="M919 640h-9.500M913 636.500l-3.500 3.500 3.500 3.500" fill="none" stroke="#8a8a8a" stroke-width="1.600"/><path d="M906 647.500h9c3 0 3.500-4.500 0-4.500M909.500 644l-3.500 3.500 3.500 3.500" fill="none" stroke="#c9c9c9" stroke-width="2"/><rect x="931.500" y="637.500" width="14.500" height="13.500" fill="#6a6a6a" stroke="#c9c9c9" stroke-width="1.400"/><path d="M933 648l3-6 3 4 2.500-5 3 7z" fill="#3a3a3a"/><rect x="931.500" y="649" width="14.500" height="2.500" fill="#c9c9c9"/><rect x="1042" y="636.500" width="10" height="9.500" fill="none" stroke="#c9c9c9" stroke-width="1.200"/><path d="M1050 638v6.500l-6-3.250z" fill="#c9c9c9"/><path d="M898.500 689a7.200 7.200 0 1 0 1.700 5.800h-6.200" fill="none" stroke="#b4b4b4" stroke-width="3.600"/></svg><svg style="left:1690px;top:420px;" width="202" height="480" viewBox="1690 420 202 480"><rect x="1695" y="430" width="17" height="17" fill="#fff"/><circle cx="1703" cy="438" r="7.500" fill="#000"/><rect x="1708" y="443" width="3.500" height="3.500" fill="#7c86c8"/><rect x="1724.500" y="432.500" width="16" height="16" fill="#f0a840"/><path d="M1728.500 433v15M1732.500 433v15M1736.500 433v15" stroke="#f8cc80" stroke-width="1.500"/><rect x="1751.500" y="432" width="17" height="17" fill="#fff"/><text x="1753" y="445" font-size="11" fill="#222" font-family="Liberation Sans">Aa</text><path d="M1780 433.500h15l-1 9.500-4 4h-10z" fill="#e8c860" stroke="#c8d8a0" stroke-width="1"/><path d="M1782 436h11l-.7 6-3 3h-7.300z" fill="#e8a850"/><path d="M1787 436h6l-.7 6-3 3z" fill="#8cc878"/><defs><linearGradient id="gg" x1="0" x2="1"><stop offset="0" stop-color="#fff"/><stop offset="1" stop-color="#000"/></linearGradient></defs><rect x="1806.500" y="432" width="17" height="17" fill="url(#gg)"/><rect x="1874.500" y="432.500" width="9" height="9" fill="none" stroke="#c9c9c9" stroke-width="1.100"/><path d="M1882 434v6l-5.500-3z" fill="#c9c9c9"/><rect x="1874.500" y="783.500" width="9" height="9" fill="none" stroke="#c9c9c9" stroke-width="1.100"/><path d="M1882 785v6l-5.500-3z" fill="#c9c9c9"/><g stroke="#c9c9c9" fill="none" stroke-width="1.600"><path d="M1702 745h7M1702 750h5M1702 755h12"/><path d="M1708.500 752l6-7 2 2-6 7z" fill="#c9c9c9" stroke="none"/></g><g stroke="#c9c9c9" fill="none" stroke-width="1.500"><path d="M1736.500 745.500h7l3.500 3.500v9h-10.500z"/><path d="M1733.500 745.500h5M1736 743v5"/></g><g stroke="#c9c9c9" fill="none" stroke-width="1.300"><rect x="1768" y="745" width="8" height="6.500"/><rect x="1772" y="749" width="8" height="6.500" fill="#3b3b3b"/></g><rect x="1798" y="742.500" width="16" height="16" fill="#9a9a9a"/><path d="M1800 744.500l12 12M1812 744.500l-12 12" stroke="#eee" stroke-width="2.600"/><path d="M1843.500 750a5.800 5.800 0 1 1-2-4.300" fill="none" stroke="#c9c9c9" stroke-width="2.200"/><path d="M1838.500 743.500h5.500v5.500z" fill="#c9c9c9"/><path d="M1863 751v-6.500h8l4 4v2.500" fill="none" stroke="#c9c9c9" stroke-width="1.500"/><path d="M1862.500 751h15v6.500h-15z" fill="#c9c9c9"/><path d="M1698 784.500h14l-2 3h-14zM1698 789.500h14l-2 3h-14zM1698 794.500h14l-2 3h-14z" fill="#c9c9c9"/><rect x="1721.500" y="783.500" width="15" height="15" fill="none" stroke="#c9c9c9" stroke-width="1.300"/><path d="M1725.500 786.500v9M1729 786.500v9M1732.500 786.500v9" stroke="#c9c9c9" stroke-width="1.400"/><path d="M1748 796c2-6 10-6 12 0" fill="none" stroke="#c9c9c9" stroke-width="2"/><path d="M1748 788.500h13" stroke="#c9c9c9" stroke-width="1.200"/><rect x="1746.500" y="787" width="3" height="3" fill="#c9c9c9"/><rect x="1759.500" y="787" width="3" height="3" fill="#c9c9c9"/><circle cx="1754.500" cy="788.500" r="1.700" fill="#c9c9c9"/><path d="M1849 818a5 5 0 1 1 1.500 6" fill="none" stroke="#c9c9c9" stroke-width="1.600"/><path d="M1846 816.500l3 3.500 3.500-3z" fill="#c9c9c9"/><circle cx="1850" cy="826" r="2" fill="#c9c9c9"/><path d="M1744.500 873l-8 10" stroke="#c9c9c9" stroke-width="1.500"/><path d="M1736.500 883l-3 3 1-4z" fill="#c9c9c9" stroke="#c9c9c9" stroke-width="1.500"/><g transform="translate(1771,880)" fill="#c9c9c9"><path d="M0-7.500l2.800 3.200h-1.900v3.400h3.400v-1.900l3.200 2.800-3.200 2.800v-1.900h-3.400v3.400h1.900l-2.800 3.200-2.800-3.200h1.900v-3.400h-3.400v1.900l-3.200-2.800 3.200-2.800v1.900h3.400v-3.400h-1.900z"/></g><rect x="1796.5" y="872.5" width="4" height="4" fill="#c9c9c9"/><rect x="1796.5" y="876.5" width="4" height="4" fill="#777"/><rect x="1796.5" y="880.5" width="4" height="4" fill="#c9c9c9"/><rect x="1796.5" y="884.5" width="4" height="4" fill="#777"/><rect x="1800.5" y="872.5" width="4" height="4" fill="#777"/><rect x="1800.5" y="876.5" width="4" height="4" fill="#c9c9c9"/><rect x="1800.5" y="880.5" width="4" height="4" fill="#777"/><rect x="1800.5" y="884.5" width="4" height="4" fill="#c9c9c9"/><rect x="1804.5" y="872.5" width="4" height="4" fill="#c9c9c9"/><rect x="1804.5" y="876.5" width="4" height="4" fill="#777"/><rect x="1804.5" y="880.5" width="4" height="4" fill="#c9c9c9"/><rect x="1804.5" y="884.5" width="4" height="4" fill="#777"/><rect x="1808.5" y="872.5" width="4" height="4" fill="#777"/><rect x="1808.5" y="876.5" width="4" height="4" fill="#c9c9c9"/><rect x="1808.5" y="880.5" width="4" height="4" fill="#777"/><rect x="1808.5" y="884.5" width="4" height="4" fill="#c9c9c9"/></svg><svg style="left:1695px;top:509px;" width="170" height="162" viewBox="1695 509 170 162"><defs><radialGradient id="bg0"><stop offset="0" stop-color="#000"/><stop offset="0.22" stop-color="#000" stop-opacity=".9"/><stop offset="1" stop-color="#000" stop-opacity="0"/></radialGradient><radialGradient id="bg1"><stop offset="0" stop-color="#000"/><stop offset="0.42" stop-color="#000" stop-opacity=".9"/><stop offset="1" stop-color="#000" stop-opacity="0"/></radialGradient><radialGradient id="bg2"><stop offset="0" stop-color="#000"/><stop offset="0.68" stop-color="#000" stop-opacity=".9"/><stop offset="1" stop-color="#000" stop-opacity="0"/></radialGradient><radialGradient id="bsoft"><stop offset="0" stop-color="#000"/><stop offset=".55" stop-color="#000" stop-opacity=".95"/><stop offset="1" stop-color="#000" stop-opacity="0"/></radialGradient><filter id="bl"><feGaussianBlur stdDeviation="1"/></filter><filter id="bl2"><feGaussianBlur stdDeviation=".5"/></filter><filter id="n1" x="-10%" y="-10%" width="120%" height="120%"><feTurbulence type="fractalNoise" baseFrequency="0.5" numOctaves="2" seed="2" result="n"/><feColorMatrix in="n" type="matrix" values="0 0 0 0 0 0 0 0 0 0 0 0 0 0 0 8 0 0 0 -3.3" result="a"/><feComposite in="SourceGraphic" in2="a" operator="in" result="r"/><feColorMatrix in="r" type="matrix" values="1 0 0 0 0 0 1 0 0 0 0 0 1 0 0 0 0 0 2.2 -0.35"/></filter><filter id="n2" x="-10%" y="-10%" width="120%" height="120%"><feTurbulence type="fractalNoise" baseFrequency="0.6" numOctaves="2" seed="5" result="n"/><feColorMatrix in="n" type="matrix" values="0 0 0 0 0 0 0 0 0 0 0 0 0 0 0 9 0 0 0 -4.2" result="a"/><feComposite in="SourceGraphic" in2="a" operator="in" result="r"/><feColorMatrix in="r" type="matrix" values="1 0 0 0 0 0 1 0 0 0 0 0 1 0 0 0 0 0 2.4 -0.3"/></filter><filter id="n3" x="-10%" y="-10%" width="120%" height="120%"><feTurbulence type="fractalNoise" baseFrequency="0.6" numOctaves="2" seed="9" result="n"/><feColorMatrix in="n" type="matrix" values="0 0 0 0 0 0 0 0 0 0 0 0 0 0 0 9 0 0 0 -4.3" result="a"/><feComposite in="SourceGraphic" in2="a" operator="in" result="r"/><feColorMatrix in="r" type="matrix" values="1 0 0 0 0 0 1 0 0 0 0 0 1 0 0 0 0 0 2.4 -0.3"/></filter><filter id="n4" x="-10%" y="-10%" width="120%" height="120%"><feTurbulence type="fractalNoise" baseFrequency="0.4" numOctaves="2" seed="4" result="n"/><feColorMatrix in="n" type="matrix" values="0 0 0 0 0 0 0 0 0 0 0 0 0 0 0 6 0 0 0 -2.6" result="a"/><feComposite in="SourceGraphic" in2="a" operator="in" result="r"/><feColorMatrix in="r" type="matrix" values="1 0 0 0 0 0 1 0 0 0 0 0 1 0 0 0 0 0 1.3 -0.15"/></filter><filter id="n5" x="-10%" y="-10%" width="120%" height="120%"><feTurbulence type="fractalNoise" baseFrequency="0.45" numOctaves="2" seed="11" result="n"/><feColorMatrix in="n" type="matrix" values="0 0 0 0 0 0 0 0 0 0 0 0 0 0 0 8 0 0 0 -3.2" result="a"/><feComposite in="SourceGraphic" in2="a" operator="in" result="r"/><feColorMatrix in="r" type="matrix" values="1 0 0 0 0 0 1 0 0 0 0 0 1 0 0 0 0 0 2.2 -0.3"/></filter><filter id="c1" x="-10%" y="-10%" width="120%" height="120%"><feTurbulence type="fractalNoise" baseFrequency="0.32" numOctaves="2" seed="21" result="n"/><feColorMatrix in="n" type="matrix" values="0 0 0 0 0 0 0 0 0 0 0 0 0 0 0 10 0 0 0 -4.6" result="a"/><feComposite in="SourceGraphic" in2="a" operator="in" result="r"/></filter><filter id="c3" x="-10%" y="-10%" width="120%" height="120%"><feTurbulence type="fractalNoise" baseFrequency="0.7" numOctaves="2" seed="23" result="n"/><feColorMatrix in="n" type="matrix" values="0 0 0 0 0 0 0 0 0 0 0 0 0 0 0 10 0 0 0 -4.3" result="a"/><feComposite in="SourceGraphic" in2="a" operator="in" result="r"/></filter><filter id="c4" x="-10%" y="-10%" width="120%" height="120%"><feTurbulence type="fractalNoise" baseFrequency="0.4" numOctaves="2" seed="27" result="n"/><feColorMatrix in="n" type="matrix" values="0 0 0 0 0 0 0 0 0 0 0 0 0 0 0 10 0 0 0 -4.4" result="a"/><feComposite in="SourceGraphic" in2="a" operator="in" result="r"/></filter><filter id="c5" x="-10%" y="-10%" width="120%" height="120%"><feTurbulence type="fractalNoise" baseFrequency="0.5" numOctaves="2" seed="31" result="n"/><feColorMatrix in="n" type="matrix" values="0 0 0 0 0 0 0 0 0 0 0 0 0 0 0 9 0 0 0 -3.4" result="a"/><feComposite in="SourceGraphic" in2="a" operator="in" result="r"/></filter></defs><rect x="1779.0" y="524.5" width="2.500" height="2.500" fill="#333"/><path d="M1793 541h4v-4z" fill="#8aa0d0"/><rect x="1799.5" y="521.5" width="29" height="7" fill="#000"/><path d="M1825.0 539.5h5M1827.5 537.0v5" stroke="#111" stroke-width="1.200"/><ellipse cx="1848.0" cy="525.0" rx="12" ry="3.800" fill="#000" filter="url(#bl)"/><path d="M1859.0 539.5h5M1861.5 537.0v5" stroke="#111" stroke-width="1.200"/><path d="M1698.0 559.5h28" stroke="#000" stroke-width="1"/><path d="M1723.0 573.5h5M1725.5 571.0v5" stroke="#111" stroke-width="1.200"/><circle cx="1746.0" cy="560.0" r="10" fill="url(#bg0)"/><path d="M1757.0 573.5h5M1759.5 571.0v5" stroke="#111" stroke-width="1.200"/><circle cx="1780.0" cy="560.0" r="11.5" fill="url(#bg1)"/><path d="M1791.0 573.5h5M1793.5 571.0v5" stroke="#111" stroke-width="1.200"/><circle cx="1814.0" cy="560.0" r="13" fill="url(#bg2)"/><path d="M1825.0 573.5h5M1827.5 571.0v5" stroke="#111" stroke-width="1.200"/><rect x="1831.5" y="543.5" width="33" height="33" fill="#fff" stroke="#000" stroke-width="1"/><circle cx="1848.0" cy="560.0" r="15.300" fill="#000"/><path d="M1859.0 573.5h5M1861.5 571.0v5" stroke="#111" stroke-width="1.200"/><polygon points="1712.0,581.5 1715.2,590.6 1724.8,590.8 1717.1,596.7 1719.9,605.9 1712.0,600.4 1704.1,605.9 1706.9,596.7 1699.2,590.8 1708.8,590.6" fill="#000"/><path d="M1723.0 607.5h5M1725.5 605.0v5" stroke="#111" stroke-width="1.200"/><g filter="url(#n1)"><circle cx="1746.0" cy="594.0" r="12" fill="url(#bsoft)"/></g><path d="M1757.0 607.5h5M1759.5 605.0v5" stroke="#111" stroke-width="1.200"/><g filter="url(#n2)"><ellipse cx="1780.0" cy="594.0" rx="12.500" ry="9" fill="url(#bsoft)"/></g><path d="M1791.0 607.5h5M1793.5 605.0v5" stroke="#111" stroke-width="1.200"/><g filter="url(#n3)"><ellipse cx="1814.0" cy="593.0" rx="9" ry="13" fill="url(#bsoft)"/></g><path d="M1825.0 607.5h5M1827.5 605.0v5" stroke="#311" stroke-width="1.200"/><g filter="url(#n4)" opacity=".75"><circle cx="1848.0" cy="593.0" r="11" fill="url(#bsoft)"/></g><path d="M1859.0 607.5h5M1861.5 605.0v5" stroke="#311" stroke-width="1.200"/><g filter="url(#n5)"><circle cx="1711.0" cy="629.0" r="14" fill="url(#bsoft)"/></g><path d="M1723.0 641.5h5M1725.5 639.0v5" stroke="#411" stroke-width="1.200"/><path d="M1738.0 618.0l3.500 7" stroke="#999" stroke-width="1.800"/><path d="M1759 643h4v-4z" fill="#d88"/><g fill="#111" opacity="0.8" filter="url(#bl2)"><circle cx="1781.0" cy="613.5" r="1.1"/><circle cx="1784.0" cy="624.0" r="1.3"/><circle cx="1792.0" cy="623.0" r="1.2"/><circle cx="1777.0" cy="627.0" r="1.1"/><circle cx="1786.0" cy="628.0" r="1"/><circle cx="1772.0" cy="631.0" r="1.2"/><circle cx="1770.0" cy="632.0" r="0.8"/><circle cx="1784.0" cy="636.0" r="1.4"/><circle cx="1788.0" cy="619.0" r="0.6"/></g><path d="M1791.0 641.5h5M1793.5 639.0v5" stroke="#111" stroke-width="1.200"/><g fill="#111" opacity="0.85" filter="url(#bl2)"><circle cx="1814.0" cy="613.5" r="1.3"/><circle cx="1817.0" cy="617.0" r="1"/><circle cx="1803.0" cy="624.0" r="1.4"/><circle cx="1818.0" cy="620.0" r="1.4"/><circle cx="1811.0" cy="626.0" r="1.3"/><circle cx="1816.0" cy="625.0" r="1.6"/><circle cx="1825.0" cy="624.0" r="1.4"/><circle cx="1805.0" cy="631.0" r="1.1"/><circle cx="1809.0" cy="629.0" r="1.2"/><circle cx="1807.0" cy="632.0" r="0.9"/><circle cx="1816.0" cy="631.0" r="1.1"/><circle cx="1812.0" cy="634.0" r="1.2"/><circle cx="1819.0" cy="633.0" r="1.2"/><circle cx="1821.0" cy="636.0" r="1"/><circle cx="1818.0" cy="637.0" r="1.5"/><circle cx="1800.0" cy="618.0" r="0.9"/></g><path d="M1825.0 641.5h5M1827.5 639.0v5" stroke="#111" stroke-width="1.200"/><g fill="#111" opacity="1"><circle cx="1836.0" cy="614.0" r="0.65"/><circle cx="1844.0" cy="614.0" r="0.65"/><circle cx="1852.0" cy="615.0" r="0.65"/><circle cx="1838.0" cy="620.0" r="0.65"/><circle cx="1847.0" cy="618.0" r="0.65"/><circle cx="1853.0" cy="619.0" r="0.65"/><circle cx="1858.0" cy="619.0" r="0.65"/><circle cx="1844.0" cy="625.0" r="0.65"/><circle cx="1859.0" cy="624.0" r="0.65"/><circle cx="1835.0" cy="630.0" r="0.65"/><circle cx="1841.0" cy="629.0" r="0.65"/><circle cx="1851.0" cy="627.0" r="0.65"/><circle cx="1857.0" cy="629.0" r="0.65"/><circle cx="1838.0" cy="634.0" r="0.65"/><circle cx="1849.0" cy="633.0" r="0.65"/><circle cx="1854.0" cy="635.0" r="0.65"/><circle cx="1842.0" cy="637.0" r="0.65"/><circle cx="1850.0" cy="638.0" r="0.65"/></g><clipPath id="bc"><rect x="1695" y="509" width="170" height="162"/></clipPath><g clip-path="url(#bc)"><g filter="url(#c1)"><circle cx="1712.0" cy="663.0" r="14.500" fill="#000"/></g><circle cx="1746.0" cy="663.0" r="14.500" fill="#111"/><circle cx="1738.0" cy="655.0" r="3" fill="#fff"/><circle cx="1745.0" cy="653.0" r="3.2" fill="#fff"/><circle cx="1752.0" cy="655.0" r="3" fill="#fff"/><circle cx="1735.0" cy="662.0" r="3" fill="#fff"/><circle cx="1742.0" cy="660.0" r="3.3" fill="#fff"/><circle cx="1749.0" cy="661.0" r="3.2" fill="#fff"/><circle cx="1756.0" cy="662.0" r="3" fill="#fff"/><circle cx="1738.0" cy="669.0" r="3.2" fill="#fff"/><circle cx="1745.0" cy="668.0" r="3.2" fill="#fff"/><circle cx="1752.0" cy="668.5" r="3.2" fill="#fff"/><circle cx="1742.0" cy="674.0" r="2.6" fill="#fff"/><circle cx="1749.0" cy="674.0" r="2.6" fill="#fff"/><circle cx="1757.0" cy="669.0" r="2" fill="#fff"/><g filter="url(#c3)"><circle cx="1780.0" cy="663.0" r="14.500" fill="#000"/></g><g filter="url(#c4)"><circle cx="1814.0" cy="663.0" r="14.500" fill="#000"/></g><circle cx="1814.0" cy="663.0" r="14" fill="none" stroke="#222" stroke-width="1" stroke-dasharray="2 1.500"/><g filter="url(#c5)"><circle cx="1848.0" cy="663.0" r="14.500" fill="#000"/></g><path d="M1834.0 660.0a14.500 14.500 0 0 1 28 0z" fill="#000" opacity=".55"/></g></svg>
<div style="left:0px;top:1032px;width:1920px;height:48px;background:linear-gradient(90deg,#dde2f6 0%,#dfe5f8 20%,#e3e8f8 40%,#e4e6f3 44%,#e6e6e8 46%,#e5e5e5 100%);border-radius:16px 16px 0 0;"></div><div style="left:870px;top:1032px;width:1040px;height:48px;background:#e5e5e5;"></div><div style="left:7px;top:1039px;width:34px;height:34px;background:#d2d7ea;border-radius:50%;"></div><div style="left:17px;top:1049px;width:14px;height:14px;border:2.600px solid #1a1a1a;border-radius:50%;box-sizing:border-box;"></div><div style="left:1675px;top:1039px;width:70px;height:34px;background:#dbdbdb;border-radius:17px 4px 4px 17px;"></div><div style="left:1748px;top:1039px;width:164px;height:34px;background:#dbdbdb;border-radius:4px 17px 17px 4px;"></div><div class="t" style="left:1687px;top:1047px;font-size:14.5px;color:#1f1f1f;line-height:18px;">25 nov.</div><div class="t" style="left:1762px;top:1047px;font-size:14.5px;color:#1f1f1f;line-height:18px;">09:27</div><div style="left:1805px;top:1048px;width:16px;height:16px;background:#1f1f1f;border-radius:50%;"></div><div class="t" style="left:1805px;top:1049px;font-size:11px;font-weight:bold;color:#fff;line-height:14px;width:16px;text-align:center;">2</div><div class="t" style="left:1828px;top:1047px;font-size:14.5px;color:#1f1f1f;line-height:18px;">INTL</div><svg style="left:1867px;top:1048px;" width="16" height="14" viewBox="0 0 16 14"><path d="M8 13L0.500 4.500Q8 -1.500 15.500 4.500Z" fill="#1f1f1f"/></svg><svg style="left:1891px;top:1046px;" width="10" height="18" viewBox="0 0 10 18"><path d="M3 1h4v2h2v14h-8v-14h2z" fill="#1f1f1f"/><path d="M5.500 5l-2 5h1.500l-.5 4 2-5h-1.500z" fill="#ddd"/></svg>
<svg style="left:300px;top:1032px;" width="1400" height="48" viewBox="300 1032 1400 48"><defs><filter id="sh" x="-30%" y="-30%" width="160%" height="170%"><feDropShadow dx="0" dy="1" stdDeviation="1.200" flood-color="#000" flood-opacity=".3"/></filter><radialGradient id="recg"><stop offset="0" stop-color="#d01818"/><stop offset=".55" stop-color="#8a0808"/><stop offset=".85" stop-color="#3a0606"/><stop offset="1" stop-color="#2a1a1a" stop-opacity=".6"/></radialGradient></defs><g filter="url(#sh)"><circle cx="342.5" cy="1055.5" r="16.500" fill="#e94335"/><path d="M342.5 1055.5L328.2 1047.2A16.500 16.500 0 0 0 342.5 1072.0L349.5 1059.5z" fill="#34a853"/><path d="M342.5 1055.5L342.5 1072.0A16.500 16.500 0 0 0 356.8 1047.2L342.5 1047.25z" fill="#fbbc04"/><path d="M328.2 1047.2A16.500 16.500 0 0 1 356.8 1047.2L342.5 1047.25z" fill="#e94335"/><path d="M328.2 1047.2L335.4 1059.6L342.5 1055.5z" fill="#34a853"/></g><circle cx="342.5" cy="1055.5" r="8" fill="#fff"/><circle cx="342.5" cy="1055.5" r="6.300" fill="#3f78e0"/><circle cx="398.55" cy="1055.5" r="16.500" fill="url(#recg)"/><text x="389.05" y="1059.0" font-size="9.500" font-weight="bold" fill="#f4eaea" font-family="Liberation Serif" textLength="19">REC</text><circle cx="454.6" cy="1055.5" r="16" fill="#fff" filter="url(#sh)"/><path d="M444.6 1063.5v-14l3.500 2.500v11.500z" fill="#4285f4"/><path d="M464.6 1063.5v-14l-3.500 2.500v11.500z" fill="#34a853"/><path d="M444.6 1049.5v-1c0-2.500 2.500-3.500 4.500-2l5.500 4.200 5.500-4.200c2-1.500 4.500-.5 4.500 2v1l-10 7.500z" fill="#ea4335"/><path d="M461.1 1052.0l3.500-2.500v-1c0-2.500-2.500-3.500-4.500-2z" fill="#fbbc04"/><path d="M448.1 1052.0l-3.500-2.500v-1c0-2.500 2.500-3.500 4.500-2z" fill="#c5221f"/><circle cx="510.65" cy="1055.5" r="16.5" fill="#2f6fd6" filter="url(#sh)"/><path d="M500.65 1047.5h7l2.500 2.500h10.500v13h-20z" fill="#7fe0f4"/><path d="M500.65 1047.5h7l2.500 2.500h-9.500z" fill="#a8ecfa"/><circle cx="566.7" cy="1055.5" r="16" fill="#fff" filter="url(#sh)"/><path d="M558.7 1044.0h10.500l5.500 5.500v16.500a1 1 0 0 1-1 1h-15a1 1 0 0 1-1-1z" fill="#3a78e0"/><path d="M569.2 1044.0v5.500h5.500z" fill="#1d54b8"/><path d="M562.2 1054.0h9M562.2 1057.3h9M562.2 1060.5h6.500" stroke="#e8f0fe" stroke-width="1.500"/><circle cx="622.75" cy="1055.5" r="16" fill="#fff" filter="url(#sh)"/><circle cx="616.75" cy="1050.0" r="5.300" fill="#3f8df0"/><circle cx="628.75" cy="1050.0" r="5.300" fill="#34a853"/><circle cx="628.75" cy="1061.5" r="5.300" fill="#f05a28"/><circle cx="678.8" cy="1055.5" r="16" fill="#fff" filter="url(#sh)"/><path d="M669.8 1050.5c2-2 6-1 8 1 3-1 6-3 8.500-7 1 4 1 8-1 11-2 4-8 5-12 3-3-1.500-5-5-3.500-8z" fill="#5c5348"/><circle cx="674.8" cy="1052.5" r="2.300" fill="#fff"/><circle cx="680.3" cy="1052.5" r="2.300" fill="#fff"/><circle cx="675.3" cy="1052.7" r="1" fill="#000"/><circle cx="680.8" cy="1052.7" r="1" fill="#000"/><ellipse cx="669.8" cy="1054.5" rx="2.500" ry="2" fill="#222"/><path d="M680.8 1058.5l7 5" stroke="#8a8a8a" stroke-width="1.500"/><path d="M686.8 1062.0l3.500 4-1-4.500z" fill="#222"/><rect x="673.8" y="1075" width="10" height="2" rx="1" fill="#1a1a1a"/><circle cx="734.8499999999999" cy="1055.5" r="16" fill="#fff" filter="url(#sh)"/><polygon points="746.3,1055.0 743.2,1058.4 743.0,1063.1 738.3,1063.3 734.8,1066.5 731.4,1063.3 726.7,1063.1 726.5,1058.4 723.3,1055.0 726.5,1051.6 726.7,1046.9 731.4,1046.7 734.8,1043.5 738.3,1046.7 743.0,1046.9 743.2,1051.6" fill="#e8963a"/><circle cx="734.8499999999999" cy="1055.0" r="9.500" fill="#e8963a"/><text x="730.8499999999999" y="1059.5" font-size="12" font-weight="bold" fill="#b86818" font-family="Liberation Sans">C</text><circle cx="790.9" cy="1055.5" r="16" fill="#fff" filter="url(#sh)"/><path d="M783.4 1045.0h9.500l6 6v15h-15.500z" fill="#eaf6fc" stroke="#2a6a9c" stroke-width="1.400"/><path d="M794.4 1044.5h4.500v4.500z" fill="#2a6a9c"/><rect x="789.9" y="1053.5" width="6.500" height="4.500" fill="#2a6a9c"/><path d="M785.9 1054.0h3M785.9 1057.0h3M785.9 1060.5h10.500M785.9 1063.0h8" stroke="#3a8ab8" stroke-width="1.200"/><rect x="787.9" y="1075.500" width="6" height="1.500" rx=".7" fill="#9a9a9a"/><g filter="url(#sh)"><path d="M846.95 1055.5L847.0 1039.0A16.500 16.500 0 0 1 858.6 1043.8z" fill="#d02828"/><path d="M846.95 1055.5L858.6 1043.8A16.500 16.500 0 0 1 863.5 1055.5z" fill="#e87820"/><path d="M846.95 1055.5L863.5 1055.5A16.500 16.500 0 0 1 858.6 1067.2z" fill="#f0d020"/><path d="M846.95 1055.5L858.6 1067.2A16.500 16.500 0 0 1 847.0 1072.0z" fill="#3a9a30"/><path d="M846.95 1055.5L847.0 1072.0A16.500 16.500 0 0 1 835.3 1067.2z" fill="#2868d0"/><path d="M846.95 1055.5L835.3 1067.2A16.500 16.500 0 0 1 830.5 1055.5z" fill="#6030b0"/><path d="M846.95 1055.5L830.5 1055.5A16.500 16.500 0 0 1 835.3 1043.8z" fill="#b02890"/><path d="M846.95 1055.5L835.3 1043.8A16.500 16.500 0 0 1 847.0 1039.0z" fill="#901818"/></g><path d="M848.1 1053.3L845.0 1039.1" stroke="#1a1a1a" stroke-width="1.300" opacity=".75"/><path d="M849.3 1054.8L857.1 1042.5" stroke="#1a1a1a" stroke-width="1.300" opacity=".75"/><path d="M849.1 1056.7L863.3 1053.5" stroke="#1a1a1a" stroke-width="1.300" opacity=".75"/><path d="M847.7 1057.9L859.9 1065.7" stroke="#1a1a1a" stroke-width="1.300" opacity=".75"/><path d="M845.8 1057.7L848.9 1071.9" stroke="#1a1a1a" stroke-width="1.300" opacity=".75"/><path d="M844.6 1056.2L836.8 1068.5" stroke="#1a1a1a" stroke-width="1.300" opacity=".75"/><path d="M844.8 1054.3L830.6 1057.5" stroke="#1a1a1a" stroke-width="1.300" opacity=".75"/><path d="M846.2 1053.1L834.0 1045.3" stroke="#1a1a1a" stroke-width="1.300" opacity=".75"/><circle cx="846.95" cy="1055.5" r="2.300" fill="#fff"/><circle cx="903.0" cy="1055.5" r="16" fill="#fff" filter="url(#sh)"/><path d="M903.0 1043.5l11.500 11.500c1 1 .5 2.500-1 2.500h-21c-1.500 0-2-1.500-1-2.500z" fill="#111"/><path d="M903.0 1045.5l5 5-2.500 1.500-2.500-2-2.500 2-2.500-1.500z" fill="#fff" opacity=".85"/><path d="M894.0 1059.5c3 0 5 1.500 9 1.500s6-1.500 9-1.500c1 2-3 3-3 4.500s2 1 2 2.500-4 2-8 2-8-.5-8-2 2-1 2-2.500-4-2.500-3-4.500z" fill="#111"/><rect x="900.0" y="1075.500" width="6" height="1.500" rx=".7" fill="#9a9a9a"/><circle cx="959.05" cy="1055.5" r="16" fill="#fff" filter="url(#sh)"/><path d="M950.05 1050.5l4-4 14 14-4 4z" fill="#c8d0e8" stroke="#6878b0" stroke-width="1"/><path d="M964.05 1046.0l4.500 4.500-12.500 12.500-5.500 1.500 1.500-5.500z" fill="#aab4dc" stroke="#5868a8" stroke-width="1"/><path d="M953.05 1049.5l2-2M956.05 1052.5l2-2M964.05 1060.5l2-2M967.05 1063.5l2-2" stroke="#6878b0" stroke-width="1"/><g filter="url(#sh)"><circle cx="1015.0999999999999" cy="1055.5" r="16.500" fill="#5f6368"/><path d="M1015.0999999999999 1039.0A16.500 16.500 0 0 1 1031.6 1055.5H1015.0999999999999z" fill="#3c4043"/><path d="M1015.0999999999999 1055.5H1031.6A16.500 16.500 0 0 1 1015.0999999999999 1072.0z" fill="#4285f4"/><path d="M1015.0999999999999 1039.0A16.500 16.500 0 0 0 998.5999999999999 1055.5H1015.0999999999999z" fill="#80868b"/></g><path d="M1005.5999999999999 1049.0h5.500M1005.5999999999999 1062.0h5.500M1008.3 1059.3v5.500M1019.0999999999999 1046.5l5 5M1024.1 1046.5l-5 5M1018.5999999999999 1060.5h6M1018.5999999999999 1063.5h6" stroke="#fff" stroke-width="1.500"/><circle cx="1071.15" cy="1055.5" r="16" fill="#f8fcff" filter="url(#sh)"/><g fill="none" stroke="#9cc8e0" stroke-width="1.100"><rect x="1060.65" y="1048.5" width="13" height="9"/><rect x="1066.15" y="1046.0" width="9" height="3"/><rect x="1064.15" y="1053.5" width="9" height="11"/><rect x="1073.15" y="1052.5" width="8" height="12" rx="1.500"/><path d="M1066.15 1056.5h5M1066.15 1059.5h5M1068.65 1056.5v6"/></g><circle cx="1127.1999999999998" cy="1055.5" r="16.5" fill="#1ed760" filter="url(#sh)"/><g fill="none" stroke="#111" stroke-linecap="round"><path d="M1117.1999999999998 1050.5c7-2.500 14-2 20 1.500" stroke-width="3.200"/><path d="M1118.6999999999998 1056.0c6-2 11.500-1.500 16.500 1.500" stroke-width="2.700"/><path d="M1120.1999999999998 1061.0c5-1.500 9-1 13 1.200" stroke-width="2.200"/></g><circle cx="1183.25" cy="1055.5" r="16.5" fill="#2e8b3d" filter="url(#sh)"/><g fill="none" stroke="#d8f0c0" stroke-width="1.400"><rect x="1182.25" y="1046.0" width="11" height="9"/><rect x="1178.25" y="1050.0" width="11" height="9" fill="#2e8b3d"/><rect x="1173.75" y="1054.0" width="12" height="10" fill="#2e8b3d"/><path d="M1177.25 1061.5l5-5M1178.75 1057.0l2 2M1181.25 1058.5l-1 2.500"/></g><circle cx="1239.3" cy="1055.5" r="16.5" fill="#d9482b" filter="url(#sh)"/><g fill="none" stroke="#f8d8cc" stroke-width="1.500"><rect x="1230.8" y="1048.0" width="15" height="10.500" rx="1"/><path d="M1235.3 1061.5h6M1238.3 1058.5v3"/></g><circle cx="1245.8" cy="1060.0" r="4.300" fill="#f8e8e0"/><path d="M1243.8 1061.5l4-3.200" stroke="#d9482b" stroke-width="1.200"/><circle cx="1295.35" cy="1055.5" r="16" fill="#fff" filter="url(#sh)"/><rect x="1282.85" y="1046.5" width="25" height="17.500" rx="5" fill="#f61c0d"/><path d="M1292.35 1050.5l8 4.700-8 4.700z" fill="#fff"/><circle cx="1351.4" cy="1055.5" r="16.5" fill="#0a0a0a" filter="url(#sh)"/><rect x="1342.9" y="1047.0" width="17" height="17" rx="1.500" fill="#f28a1e" transform="rotate(45 1351.4 1055.5)"/><text x="1343.4" y="1056.5" font-size="9" font-weight="bold" fill="#fff" font-family="Liberation Sans" transform="rotate(-35 1351.4 1055.5)">npo</text><g filter="url(#sh)"><circle cx="1407.45" cy="1055.5" r="16.500" fill="#14213c"/><path d="M1392.65 1063.0A16.500 16.500 0 0 0 1422.25 1063.0z" fill="#36c8b8"/></g><rect x="1396.95" y="1051.0" width="12.500" height="7.500" fill="none" stroke="#36c8b8" stroke-width="1"/><rect x="1409.45" y="1048.0" width="8.500" height="7.500" fill="#36c8b8"/><text x="1397.95" y="1056.8" font-size="5.500" font-weight="bold" fill="#36c8b8" font-family="Liberation Sans">TUNE</text><text x="1410.95" y="1053.8" font-size="6" font-weight="bold" fill="#14213c" font-family="Liberation Sans">IN</text><text x="1403.45" y="1068.5" font-size="4.500" font-weight="bold" fill="#14213c" font-family="Liberation Sans">PRO</text><circle cx="1463.5" cy="1055.5" r="16" fill="#fff" filter="url(#sh)"/><path d="M1463.5 1067.5c-1-4-7.500-8-7.500-14a7.500 7.500 0 0 1 15 0c0 6-6.500 10-7.500 14z" fill="#34a853"/><path d="M1456.0 1053.5a7.500 7.500 0 0 1 3.500-6.500l4 6.500-5.500 6.500c-1.200-2-2-4-2-6.500z" fill="#ea4335"/><path d="M1459.5 1047.0a7.500 7.500 0 0 1 8.500.5l-4.500 6z" fill="#4285f4"/><path d="M1468.0 1047.5a7.500 7.500 0 0 1 3 6c0 2-1 4-2 5.500l-5.500-5.500z" fill="#fbbc04"/><circle cx="1463.5" cy="1053.3" r="2.800" fill="#fff"/><circle cx="1519.55" cy="1055.5" r="16" fill="#fff" filter="url(#sh)"/><rect x="1512.55" y="1048.0" width="14" height="14" fill="#2eb0c4"/><rect x="1518.05" y="1051.5" width="3" height="6" rx="1.500" fill="none" stroke="#8ee0ec" stroke-width=".9"/><circle cx="1575.6" cy="1055.5" r="16" fill="#fff" filter="url(#sh)"/><path d="M1569.1 1046.0l9 9.500-9 9.500z" fill="#4285f4"/><path d="M1569.1 1046.0l12 6.500-3 3z" fill="#34a853"/><path d="M1569.1 1065.0l12-6.500-3-3z" fill="#ea4335"/><path d="M1581.1 1052.5l5.500 3-5.500 3-3-3z" fill="#fbbc04"/><circle cx="1645.6499999999999" cy="1055.5" r="16" fill="#fff" filter="url(#sh)"/><path d="M1647.6499999999999 1050.0h14M1647.6499999999999 1053.5h14" stroke="#e4e4e4" stroke-width="1"/><clipPath id="pc"><circle cx="1631.6499999999999" cy="1055.5" r="16.500"/></clipPath><g clip-path="url(#pc)"><rect x="1614.6499999999999" y="1038.5" width="34" height="34" fill="#5a8ac0"/><rect x="1614.6499999999999" y="1038.5" width="34" height="9" fill="#7ab0d8"/><rect x="1614.6499999999999" y="1063.5" width="34" height="10" fill="#3a58a8"/><rect x="1623.3" y="1055.3" width="4.7" height="2.7" fill="#f4f4f4"/><rect x="1634.2" y="1056.4" width="2.8" height="2.1" fill="#d88838"/><rect x="1647.5" y="1054.0" width="3.2" height="3.7" fill="#d88838"/><rect x="1623.1" y="1048.2" width="4.2" height="3.2" fill="#2a3a6a"/><rect x="1617.7" y="1059.1" width="2.9" height="1.6" fill="#e8e0c8"/><rect x="1643.3" y="1054.0" width="4.1" height="3.8" fill="#2a3a6a"/><rect x="1628.3" y="1059.9" width="4.9" height="1.8" fill="#d88838"/><rect x="1627.3" y="1046.1" width="2.7" height="3.9" fill="#d88838"/><rect x="1629.6" y="1056.8" width="3.3" height="3.6" fill="#4a9a58"/><rect x="1634.0" y="1055.1" width="3.8" height="3.8" fill="#2a3a6a"/><rect x="1637.5" y="1062.2" width="5.0" height="3.2" fill="#4a9a58"/><rect x="1620.9" y="1061.0" width="4.1" height="2.0" fill="#c84838"/><rect x="1642.3" y="1055.8" width="2.4" height="2.7" fill="#4a9a58"/><rect x="1636.1" y="1054.2" width="4.4" height="2.5" fill="#f4f4f4"/><rect x="1620.5" y="1050.8" width="4.6" height="1.6" fill="#2a3a6a"/><rect x="1635.3" y="1046.3" width="3.7" height="3.8" fill="#f4f4f4"/><rect x="1624.6" y="1049.7" width="2.9" height="1.7" fill="#e8e0c8"/><rect x="1634.8" y="1046.1" width="4.9" height="2.2" fill="#e8c848"/><rect x="1624.1" y="1057.9" width="2.9" height="3.9" fill="#f4f4f4"/><rect x="1644.3" y="1052.3" width="4.6" height="2.5" fill="#d88838"/><rect x="1643.4" y="1057.8" width="3.9" height="3.9" fill="#c84838"/><rect x="1631.9" y="1053.3" width="4.8" height="2.6" fill="#e8c848"/><rect x="1623.9" y="1051.0" width="2.0" height="2.5" fill="#f4f4f4"/><rect x="1634.2" y="1045.9" width="2.2" height="3.1" fill="#3a78c8"/><rect x="1630.6" y="1057.7" width="3.8" height="2.2" fill="#f4f4f4"/><rect x="1631.3" y="1056.1" width="4.9" height="2.1" fill="#e8e0c8"/><rect x="1630.3" y="1056.2" width="2.5" height="2.0" fill="#f4f4f4"/><rect x="1639.9" y="1060.7" width="2.9" height="2.4" fill="#4a9a58"/><rect x="1640.4" y="1046.0" width="2.9" height="2.1" fill="#3a78c8"/><rect x="1641.4" y="1049.8" width="4.0" height="3.1" fill="#3a78c8"/><rect x="1618.8" y="1056.3" width="4.0" height="2.1" fill="#f4f4f4"/><rect x="1641.6" y="1062.8" width="3.0" height="3.1" fill="#c84838"/><rect x="1644.0" y="1053.6" width="4.4" height="1.6" fill="#e8c848"/><rect x="1646.3" y="1051.2" width="4.6" height="2.4" fill="#3a78c8"/><rect x="1642.1" y="1047.0" width="3.8" height="2.6" fill="#f4f4f4"/><rect x="1632.2" y="1060.8" width="3.0" height="2.5" fill="#d88838"/><rect x="1629.1" y="1052.9" width="2.5" height="1.5" fill="#2a3a6a"/><rect x="1645.8" y="1061.3" width="3.7" height="4.0" fill="#2a3a6a"/><rect x="1638.6" y="1046.1" width="4.5" height="3.2" fill="#d88838"/><rect x="1632.3" y="1050.7" width="4.7" height="3.7" fill="#f4f4f4"/><rect x="1643.1" y="1063.0" width="4.4" height="1.6" fill="#c84838"/><rect x="1644.6" y="1058.0" width="4.7" height="3.7" fill="#e8c848"/><rect x="1634.1" y="1045.7" width="2.5" height="2.2" fill="#c84838"/><rect x="1636.9" y="1054.9" width="2.2" height="3.8" fill="#2a3a6a"/><rect x="1619.3" y="1047.8" width="4.4" height="1.7" fill="#d88838"/><rect x="1622.7" y="1047.7" width="2.5" height="3.5" fill="#c84838"/><rect x="1645.1" y="1060.0" width="3.5" height="2.9" fill="#e8e0c8"/><rect x="1628.5" y="1059.1" width="2.8" height="2.8" fill="#e8c848"/><rect x="1629.2" y="1054.0" width="4.6" height="3.4" fill="#e8e0c8"/><rect x="1617.1" y="1046.4" width="4.9" height="3.6" fill="#d88838"/><rect x="1618.4" y="1054.5" width="2.5" height="1.7" fill="#f4f4f4"/><rect x="1628.0" y="1052.5" width="3.1" height="2.0" fill="#4a9a58"/><rect x="1626.2" y="1047.7" width="4.1" height="2.5" fill="#e8e0c8"/><rect x="1618.2" y="1048.7" width="3.4" height="3.1" fill="#f4f4f4"/><rect x="1633.0" y="1057.0" width="3.9" height="2.6" fill="#e8e0c8"/><rect x="1627.6" y="1054.4" width="3.3" height="3.2" fill="#f4f4f4"/><rect x="1630.4" y="1049.9" width="4.1" height="1.7" fill="#4a9a58"/><rect x="1629.2" y="1053.2" width="4.8" height="2.4" fill="#e8e0c8"/><rect x="1644.4" y="1059.7" width="2.4" height="3.2" fill="#4a9a58"/><rect x="1645.7" y="1058.7" width="4.0" height="3.3" fill="#2a3a6a"/></g></svg>
</body></html>
